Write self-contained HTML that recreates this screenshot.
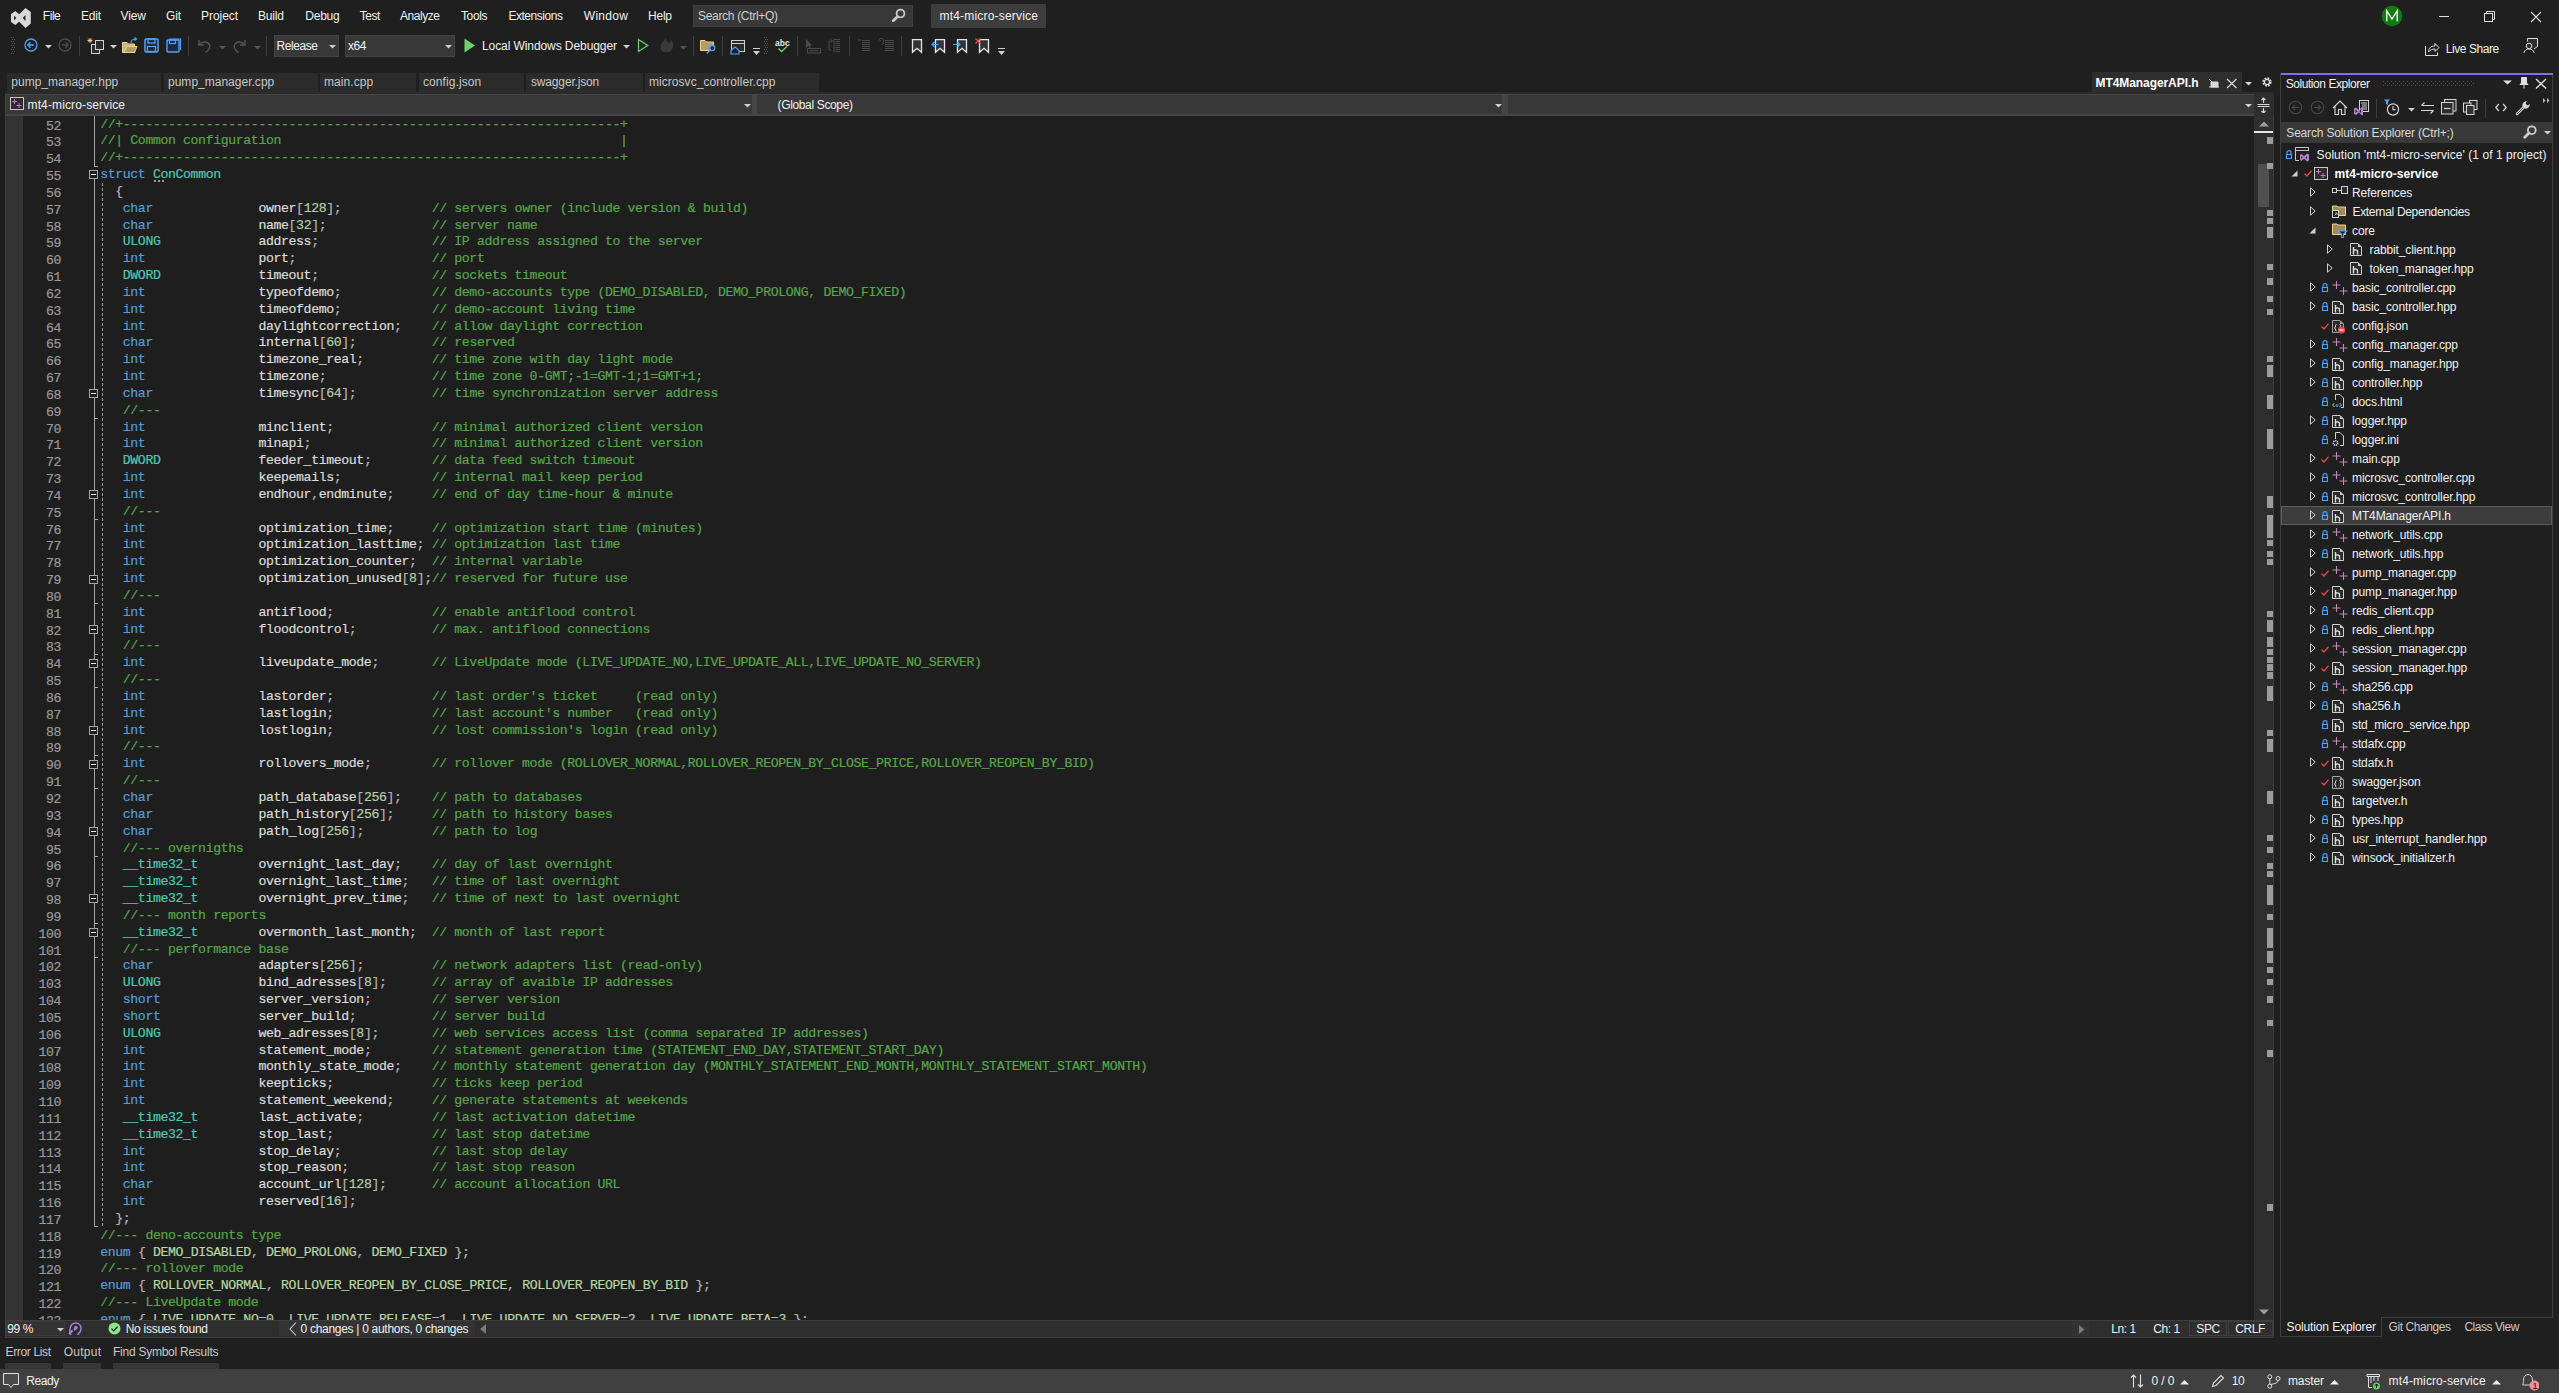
<!DOCTYPE html><html><head><meta charset="utf-8"><title>VS</title><style>html,body{margin:0;padding:0;width:2559px;height:1393px;overflow:hidden;background:#1f1f1f;position:relative}</style></head><body>
<svg style="position:absolute;left:4px;top:2px;" width="34" height="32" viewBox="0 0 34 32"><path d="M7 12 L11.3 9 L15.2 12.2 L21.5 6 L26.8 9.9 V21.6 L21.5 26 L15.2 19.8 L11.3 23 L7 20 Z M10 13.8 L12.4 16 L10 18.2 Z M21.5 13 L18.8 16 L21.5 19 Z" fill="#d9d9d9" fill-rule="evenodd"/></svg>
<div style="position:absolute;left:42.81px;top:9.14px;font-family:'Liberation Sans', sans-serif;font-size:12px;line-height:normal;color:#f1f1f1;font-weight:normal;letter-spacing:-0.45px;white-space:pre;">File</div>
<div style="position:absolute;left:81.0px;top:9.14px;font-family:'Liberation Sans', sans-serif;font-size:12px;line-height:normal;color:#f1f1f1;font-weight:normal;letter-spacing:-0.233px;white-space:pre;">Edit</div>
<div style="position:absolute;left:120.6px;top:9.14px;font-family:'Liberation Sans', sans-serif;font-size:12px;line-height:normal;color:#f1f1f1;font-weight:normal;letter-spacing:-0.133px;white-space:pre;">View</div>
<div style="position:absolute;left:166.0px;top:9.14px;font-family:'Liberation Sans', sans-serif;font-size:12px;line-height:normal;color:#f1f1f1;font-weight:normal;letter-spacing:-0.18px;white-space:pre;">Git</div>
<div style="position:absolute;left:201.0px;top:9.14px;font-family:'Liberation Sans', sans-serif;font-size:12px;line-height:normal;color:#f1f1f1;font-weight:normal;letter-spacing:-0.053px;white-space:pre;">Project</div>
<div style="position:absolute;left:258.0px;top:9.14px;font-family:'Liberation Sans', sans-serif;font-size:12px;line-height:normal;color:#f1f1f1;font-weight:normal;letter-spacing:-0.175px;white-space:pre;">Build</div>
<div style="position:absolute;left:305.3px;top:9.14px;font-family:'Liberation Sans', sans-serif;font-size:12px;line-height:normal;color:#f1f1f1;font-weight:normal;letter-spacing:-0.235px;white-space:pre;">Debug</div>
<div style="position:absolute;left:359.81px;top:9.14px;font-family:'Liberation Sans', sans-serif;font-size:12px;line-height:normal;color:#f1f1f1;font-weight:normal;letter-spacing:-0.45px;white-space:pre;">Test</div>
<div style="position:absolute;left:399.99px;top:9.14px;font-family:'Liberation Sans', sans-serif;font-size:12px;line-height:normal;color:#f1f1f1;font-weight:normal;letter-spacing:-0.45px;white-space:pre;">Analyze</div>
<div style="position:absolute;left:461.0px;top:9.14px;font-family:'Liberation Sans', sans-serif;font-size:12px;line-height:normal;color:#f1f1f1;font-weight:normal;letter-spacing:-0.38px;white-space:pre;">Tools</div>
<div style="position:absolute;left:508.39px;top:9.14px;font-family:'Liberation Sans', sans-serif;font-size:12px;line-height:normal;color:#f1f1f1;font-weight:normal;letter-spacing:-0.45px;white-space:pre;">Extensions</div>
<div style="position:absolute;left:583.75px;top:9.14px;font-family:'Liberation Sans', sans-serif;font-size:12px;line-height:normal;color:#f1f1f1;font-weight:normal;letter-spacing:0.306px;white-space:pre;">Window</div>
<div style="position:absolute;left:648.0px;top:9.14px;font-family:'Liberation Sans', sans-serif;font-size:12px;line-height:normal;color:#f1f1f1;font-weight:normal;letter-spacing:-0.22px;white-space:pre;">Help</div>
<div style="position:absolute;left:693px;top:5px;width:220px;height:22px;background:#383838;box-sizing:border-box;border:1px solid #3e3e3e;"></div>
<div style="position:absolute;left:698.0px;top:9.14px;font-family:'Liberation Sans', sans-serif;font-size:12px;line-height:normal;color:#d0d0d0;font-weight:normal;letter-spacing:-0.311px;white-space:pre;">Search (Ctrl+Q)</div>
<svg style="position:absolute;left:891px;top:8px;" width="15" height="15" viewBox="0 0 15 15"><circle cx="9.5" cy="5.5" r="3.9" fill="none" stroke="#c8c8c8" stroke-width="1.8"/><path d="M6.6 8.4 L2.2 12.8" stroke="#c8c8c8" stroke-width="2.8" stroke-linecap="round"/></svg>
<div style="position:absolute;left:931px;top:4px;width:115px;height:24px;background:#3d3d3d;"></div>
<div style="position:absolute;left:939.5px;top:9.14px;font-family:'Liberation Sans', sans-serif;font-size:12px;line-height:normal;color:#f1f1f1;font-weight:normal;letter-spacing:0.197px;white-space:pre;">mt4-micro-service</div>
<svg style="position:absolute;left:2381px;top:5px;" width="22" height="22" viewBox="0 0 22 22"><circle cx="11" cy="11" r="10.2" fill="#107c10"/><path d="M5.8 16.2 V5.8 L11 14 L16.2 5.8 V16.2" fill="none" stroke="#ffffff" stroke-width="1.3"/></svg>
<div style="position:absolute;left:2439px;top:16px;width:10px;height:1px;background:#e0e0e0;"></div>
<svg style="position:absolute;left:2484px;top:11px;" width="12" height="12" viewBox="0 0 12 12"><rect x="0.5" y="2.5" width="8" height="8" fill="none" stroke="#e0e0e0"/><path d="M2.5 2.5 V0.5 H10.5 V8.5 H8.5" fill="none" stroke="#e0e0e0"/></svg>
<svg style="position:absolute;left:2530px;top:11px;" width="12" height="12" viewBox="0 0 12 12"><path d="M1 1 L11 11 M11 1 L1 11" stroke="#e0e0e0" stroke-width="1.1"/></svg>
<svg style="position:absolute;left:11px;top:37px;" width="5" height="18" viewBox="0 0 5 18"><rect x="0" y="0" width="1" height="1" fill="#555"/><rect x="2" y="0" width="1" height="1" fill="#555"/><rect x="1" y="2" width="1" height="1" fill="#555"/><rect x="3" y="2" width="1" height="1" fill="#555"/><rect x="0" y="4" width="1" height="1" fill="#555"/><rect x="2" y="4" width="1" height="1" fill="#555"/><rect x="1" y="6" width="1" height="1" fill="#555"/><rect x="3" y="6" width="1" height="1" fill="#555"/><rect x="0" y="8" width="1" height="1" fill="#555"/><rect x="2" y="8" width="1" height="1" fill="#555"/><rect x="1" y="10" width="1" height="1" fill="#555"/><rect x="3" y="10" width="1" height="1" fill="#555"/><rect x="0" y="12" width="1" height="1" fill="#555"/><rect x="2" y="12" width="1" height="1" fill="#555"/><rect x="1" y="14" width="1" height="1" fill="#555"/><rect x="3" y="14" width="1" height="1" fill="#555"/><rect x="0" y="16" width="1" height="1" fill="#555"/><rect x="2" y="16" width="1" height="1" fill="#555"/></svg>
<svg style="position:absolute;left:24px;top:38px;" width="14" height="14" viewBox="0 0 14 14"><circle cx="7" cy="7" r="6" fill="none" stroke="#4da3ff" stroke-width="1.3"/><path d="M10 7 H4 M6.5 4.3 L3.8 7 L6.5 9.7" fill="none" stroke="#4da3ff" stroke-width="1.3"/></svg>
<svg style="position:absolute;left:45px;top:45px;" width="7" height="4" viewBox="0 0 7 4"><path d="M0 0 H7 L3.5 3.5 Z" fill="#d0d0d0"/></svg>
<svg style="position:absolute;left:58px;top:38px;" width="14" height="14" viewBox="0 0 14 14"><circle cx="7" cy="7" r="6" fill="none" stroke="#4a4a4a" stroke-width="1.3"/><path d="M4 7 H10 M7.5 4.3 L10.2 7 L7.5 9.7" fill="none" stroke="#4a4a4a" stroke-width="1.3"/></svg>
<div style="position:absolute;left:79px;top:36px;width:1px;height:20px;background:#3d3d3d;"></div>
<svg style="position:absolute;left:87px;top:37px;" width="18" height="18" viewBox="0 0 18 18"><rect x="4.5" y="7.5" width="8" height="9" fill="#2d2d2d" stroke="#d0d0d0"/><rect x="8.5" y="3.5" width="8" height="9" fill="#2d2d2d" stroke="#d0d0d0"/><path d="M3 1 V6 M0.5 3.5 H5.5 M1.2 1.7 L4.8 5.3 M4.8 1.7 L1.2 5.3" stroke="#f0d080" stroke-width="1"/></svg>
<svg style="position:absolute;left:110px;top:45px;" width="7" height="4" viewBox="0 0 7 4"><path d="M0 0 H7 L3.5 3.5 Z" fill="#d0d0d0"/></svg>
<svg style="position:absolute;left:122px;top:37px;" width="16" height="17" viewBox="0 0 16 17"><path d="M0.5 5.5 H5 L6.5 7 H12.5 V15.5 H0.5 Z" fill="#c8b57a" stroke="#f2d38b"/><path d="M2 15.5 L4.5 9.5 H15 L12.5 15.5 Z" fill="#b09c64" stroke="#f2d38b"/><path d="M9 6 C9 3 11 2 14 2 M12.5 0.5 L14.5 2 L12.5 3.5" fill="none" stroke="#4da3ff" stroke-width="1.2"/></svg>
<svg style="position:absolute;left:144px;top:38px;" width="16" height="15" viewBox="0 0 16 15"><rect x="1" y="1" width="13" height="13" rx="1" fill="#1f2a38" stroke="#4da3ff" stroke-width="1.5"/><rect x="4" y="1" width="7" height="4" fill="none" stroke="#4da3ff" stroke-width="1.3"/><rect x="3.5" y="8.5" width="8" height="5" fill="none" stroke="#4da3ff" stroke-width="1.2"/></svg>
<svg style="position:absolute;left:166px;top:38px;" width="16" height="15" viewBox="0 0 16 15"><rect x="1" y="2" width="12" height="12" rx="1" fill="#1f2a38" stroke="#4da3ff" stroke-width="1.4"/><path d="M3 1 H14.5 V12" fill="none" stroke="#4da3ff" stroke-width="1.2"/><rect x="3.5" y="2" width="6" height="3.5" fill="none" stroke="#4da3ff" stroke-width="1.2"/></svg>
<div style="position:absolute;left:188px;top:36px;width:1px;height:20px;background:#3d3d3d;"></div>
<svg style="position:absolute;left:197px;top:38px;" width="15" height="15" viewBox="0 0 15 15"><path d="M2 2 V7 H7 M2.5 6.5 C5 3 11 3 12.5 7 C13.5 10 11.5 12.5 8.5 14.5" fill="none" stroke="#555" stroke-width="1.4"/></svg>
<svg style="position:absolute;left:219px;top:46px;" width="7" height="4" viewBox="0 0 7 4"><path d="M0 0 H7 L3.5 3.5 Z" fill="#555"/></svg>
<svg style="position:absolute;left:232px;top:38px;" width="15" height="15" viewBox="0 0 15 15"><path d="M13 2 V7 H8 M12.5 6.5 C10 3 4 3 2.5 7 C1.5 10 3.5 12.5 6.5 14.5" fill="none" stroke="#555" stroke-width="1.4"/></svg>
<svg style="position:absolute;left:254px;top:46px;" width="7" height="4" viewBox="0 0 7 4"><path d="M0 0 H7 L3.5 3.5 Z" fill="#555"/></svg>
<div style="position:absolute;left:266px;top:36px;width:1px;height:20px;background:#3d3d3d;"></div>
<div style="position:absolute;left:274px;top:35px;width:65px;height:22px;background:#383838;box-sizing:border-box;border:1px solid #434343;"></div>
<div style="position:absolute;left:276.58px;top:39.14px;font-family:'Liberation Sans', sans-serif;font-size:12px;line-height:normal;color:#f1f1f1;font-weight:normal;letter-spacing:-0.45px;white-space:pre;">Release</div>
<svg style="position:absolute;left:328.5px;top:45px;" width="7" height="4" viewBox="0 0 7 4"><path d="M0 0 H7 L3.5 3.5 Z" fill="#d0d0d0"/></svg>
<div style="position:absolute;left:345px;top:35px;width:110px;height:22px;background:#383838;box-sizing:border-box;border:1px solid #434343;"></div>
<div style="position:absolute;left:348.04px;top:39.14px;font-family:'Liberation Sans', sans-serif;font-size:12px;line-height:normal;color:#f1f1f1;font-weight:normal;letter-spacing:-0.45px;white-space:pre;">x64</div>
<svg style="position:absolute;left:445px;top:45px;" width="7" height="4" viewBox="0 0 7 4"><path d="M0 0 H7 L3.5 3.5 Z" fill="#d0d0d0"/></svg>
<svg style="position:absolute;left:464px;top:38px;" width="12" height="15" viewBox="0 0 12 15"><path d="M0.5 0.5 L11 7.5 L0.5 14.5 Z" fill="#6fd073"/></svg>
<div style="position:absolute;left:482.0px;top:39.14px;font-family:'Liberation Sans', sans-serif;font-size:12px;line-height:normal;color:#f1f1f1;font-weight:normal;letter-spacing:-0.083px;white-space:pre;">Local Windows Debugger</div>
<svg style="position:absolute;left:623px;top:45px;" width="7" height="4" viewBox="0 0 7 4"><path d="M0 0 H7 L3.5 3.5 Z" fill="#d0d0d0"/></svg>
<svg style="position:absolute;left:637px;top:38px;" width="12" height="15" viewBox="0 0 12 15"><path d="M1.5 1.5 L10.8 7.5 L1.5 13.5 Z" fill="#1c2a1c" stroke="#6fd073" stroke-width="1.2"/></svg>
<svg style="position:absolute;left:659px;top:37px;" width="15" height="16" viewBox="0 0 15 16"><path d="M7.5 15.5 C3 15.5 1 12.5 1.5 9 C2 6 5 4 7 1 C7.5 4 9 5 10 6.5 C11 5 12 3.5 13 3 C14 6 14.5 9 13.5 11.5 C12.5 14 10.5 15.5 7.5 15.5 Z" fill="#3a3a3a"/></svg>
<svg style="position:absolute;left:680px;top:46px;" width="7" height="4" viewBox="0 0 7 4"><path d="M0 0 H7 L3.5 3.5 Z" fill="#555"/></svg>
<div style="position:absolute;left:693px;top:36px;width:1px;height:20px;background:#3d3d3d;"></div>
<svg style="position:absolute;left:700px;top:39px;" width="17" height="15" viewBox="0 0 17 15"><path d="M0.5 1.5 H5 L6.5 3 H13.5 V11.5 H0.5 Z" fill="#b09c64" stroke="#f2d38b"/><circle cx="12.3" cy="9" r="2.5" fill="#1f1f1f" stroke="#4da3ff" stroke-width="1.3"/><path d="M10.5 10.8 L6.8 14.5" stroke="#4da3ff" stroke-width="1.3"/></svg>
<div style="position:absolute;left:722px;top:36px;width:1px;height:20px;background:#3d3d3d;"></div>
<svg style="position:absolute;left:730px;top:39px;" width="17" height="16" viewBox="0 0 17 16"><rect x="1.5" y="1.5" width="13" height="11" fill="#2a2a2a" stroke="#d0d0d0"/><path d="M1.5 4.5 H14.5" stroke="#d0d0d0"/><path d="M1 11.5 L5 8 L9 11.5 V15 H1 Z" fill="#1f1f1f" stroke="#4da3ff" stroke-width="1.2"/></svg>
<svg style="position:absolute;left:753px;top:48px;" width="7" height="8" viewBox="0 0 7 8"><rect x="0" y="0" width="7" height="1" fill="#d0d0d0"/><path d="M0 3 H7 L3.5 7 Z" fill="#d0d0d0"/></svg>
<svg style="position:absolute;left:764px;top:37px;" width="5" height="18" viewBox="0 0 5 18"><rect x="0" y="0" width="1" height="1" fill="#555"/><rect x="2" y="0" width="1" height="1" fill="#555"/><rect x="1" y="2" width="1" height="1" fill="#555"/><rect x="3" y="2" width="1" height="1" fill="#555"/><rect x="0" y="4" width="1" height="1" fill="#555"/><rect x="2" y="4" width="1" height="1" fill="#555"/><rect x="1" y="6" width="1" height="1" fill="#555"/><rect x="3" y="6" width="1" height="1" fill="#555"/><rect x="0" y="8" width="1" height="1" fill="#555"/><rect x="2" y="8" width="1" height="1" fill="#555"/><rect x="1" y="10" width="1" height="1" fill="#555"/><rect x="3" y="10" width="1" height="1" fill="#555"/><rect x="0" y="12" width="1" height="1" fill="#555"/><rect x="2" y="12" width="1" height="1" fill="#555"/><rect x="1" y="14" width="1" height="1" fill="#555"/><rect x="3" y="14" width="1" height="1" fill="#555"/><rect x="0" y="16" width="1" height="1" fill="#555"/><rect x="2" y="16" width="1" height="1" fill="#555"/></svg>
<svg style="position:absolute;left:775px;top:39px;" width="15" height="14" viewBox="0 0 15 14"><text x="0" y="7" font-family="Liberation Sans" font-size="8.5" font-weight="bold" fill="#e8e8e8">abc</text><path d="M3.5 9.5 L6.5 12.5 L12 7.5" fill="none" stroke="#6fd073" stroke-width="1.3"/></svg>
<div style="position:absolute;left:797px;top:36px;width:1px;height:20px;background:#3d3d3d;"></div>
<svg style="position:absolute;left:805px;top:38px;" width="17" height="16" viewBox="0 0 17 16"><path d="M1 1 V10 L3.5 8 L5 11 L6 10.5 L4.8 7.5 L7.5 7.5 Z" fill="#4a4a4a"/><rect x="2.5" y="10.5" width="13" height="4.5" fill="none" stroke="#4a4a4a"/><path d="M5 12.7 H13" stroke="#4a4a4a"/></svg>
<svg style="position:absolute;left:828px;top:38px;" width="15" height="15" viewBox="0 0 15 15"><path d="M1 12 V3 H4 M3 1.5 L4.5 3 L3 4.5 M1 12 H3" fill="none" stroke="#4a4a4a"/><path d="M6 1 V14 M6 1.5 H12 M7.5 3.5 H12 M7.5 5.5 H12 M7.5 7.5 H12 M7.5 9.5 H12 M7.5 11.5 H12 M7.5 13.5 H12" stroke="#4a4a4a"/></svg>
<div style="position:absolute;left:849px;top:36px;width:1px;height:20px;background:#3d3d3d;"></div>
<svg style="position:absolute;left:858px;top:39px;" width="15" height="13" viewBox="0 0 15 13"><path d="M0 1 H3 M4 1.5 H12 M4 3.5 H12 M4 5.5 H12 M4 7.5 H12 M4 9.5 H12 M4 11.5 H12" stroke="#4a4a4a"/></svg>
<svg style="position:absolute;left:878px;top:38px;" width="17" height="15" viewBox="0 0 17 15"><path d="M3 3.5 C1 2 1 0.5 3 0.5 C6 0.5 7 3 4 7" fill="none" stroke="#4a4a4a"/><path d="M7 2.5 H16 M7 4.5 H16 M7 6.5 H16 M7 8.5 H16 M7 10.5 H16 M7 12.5 H16" stroke="#4a4a4a"/></svg>
<div style="position:absolute;left:901px;top:36px;width:1px;height:20px;background:#3d3d3d;"></div>
<svg style="position:absolute;left:910px;top:38px;" width="16" height="16" viewBox="0 0 16 16"><path d="M2.5 1.6 H11.5 V14.3 L7 10.3 L2.5 14.3 Z" fill="#333" stroke="#e8e8e8" stroke-width="1.3"/></svg>
<svg style="position:absolute;left:933px;top:38px;" width="16" height="16" viewBox="0 0 16 16"><path d="M2.5 1.6 H11.5 V14.3 L7 10.3 L2.5 14.3 Z" fill="#333" stroke="#e8e8e8" stroke-width="1.3"/></svg>
<svg style="position:absolute;left:931px;top:41px;" width="8" height="7" viewBox="0 0 8 7"><path d="M7.5 3.5 H1 M3.5 1 L1 3.5 L3.5 6" fill="none" stroke="#4da3ff" stroke-width="1.2"/></svg>
<svg style="position:absolute;left:955px;top:38px;" width="16" height="16" viewBox="0 0 16 16"><path d="M2.5 1.6 H11.5 V14.3 L7 10.3 L2.5 14.3 Z" fill="#333" stroke="#e8e8e8" stroke-width="1.3"/></svg>
<svg style="position:absolute;left:953px;top:41px;" width="8" height="7" viewBox="0 0 8 7"><path d="M0 3.5 H7 M4.5 1 L7 3.5 L4.5 6" fill="none" stroke="#4da3ff" stroke-width="1.2"/></svg>
<svg style="position:absolute;left:977px;top:38px;" width="16" height="16" viewBox="0 0 16 16"><path d="M2.5 1.6 H11.5 V14.3 L7 10.3 L2.5 14.3 Z" fill="#333" stroke="#e8e8e8" stroke-width="1.3"/></svg>
<svg style="position:absolute;left:975px;top:38px;" width="6" height="6" viewBox="0 0 6 6"><path d="M0.5 0.5 L5.5 5.5 M5.5 0.5 L0.5 5.5" stroke="#f14c4c" stroke-width="1.2"/></svg>
<svg style="position:absolute;left:998px;top:48px;" width="7" height="8" viewBox="0 0 7 8"><rect x="0" y="0" width="7" height="1" fill="#d0d0d0"/><path d="M0 3 H7 L3.5 7 Z" fill="#d0d0d0"/></svg>
<svg style="position:absolute;left:2425px;top:41px;" width="16" height="15" viewBox="0 0 16 15"><path d="M0.5 5 V14.5 H12.5 V11.5" fill="none" stroke="#e0e0e0"/><path d="M3.5 11 C3.5 7 6 5 10 5 V2.5 L14 6.5 L10 10.5 V8 C7 8 5 9 3.5 11 Z" fill="none" stroke="#e0e0e0"/></svg>
<div style="position:absolute;left:2445.84px;top:41.54px;font-family:'Liberation Sans', sans-serif;font-size:12px;line-height:normal;color:#f1f1f1;font-weight:normal;letter-spacing:-0.45px;white-space:pre;">Live Share</div>
<svg style="position:absolute;left:2523px;top:38px;" width="16" height="16" viewBox="0 0 16 16"><path d="M4.5 3.5 V0.5 H14.5 V8.5 L11 11" fill="#2d2d2d" stroke="#e0e0e0"/><circle cx="6" cy="8" r="2.8" fill="#2d2d2d" stroke="#e0e0e0"/><path d="M0.8 15 C1.5 12 3.5 11 6 11 C8.5 11 10.5 12 11.2 15" fill="none" stroke="#e0e0e0"/></svg>
<div style="position:absolute;left:7px;top:73px;width:154px;height:19px;background:#2b2b2b;"></div>
<div style="position:absolute;left:11.25px;top:75.14px;font-family:'Liberation Sans', sans-serif;font-size:12px;line-height:normal;color:#c8c8c8;font-weight:normal;letter-spacing:0.017px;white-space:pre;">pump_manager.hpp</div>
<div style="position:absolute;left:163.75px;top:73px;width:153.75px;height:19px;background:#2b2b2b;"></div>
<div style="position:absolute;left:168.0px;top:75.14px;font-family:'Liberation Sans', sans-serif;font-size:12px;line-height:normal;color:#c8c8c8;font-weight:normal;letter-spacing:0.011px;white-space:pre;">pump_manager.cpp</div>
<div style="position:absolute;left:320px;top:73px;width:96px;height:19px;background:#2b2b2b;"></div>
<div style="position:absolute;left:324.0px;top:75.14px;font-family:'Liberation Sans', sans-serif;font-size:12px;line-height:normal;color:#c8c8c8;font-weight:normal;letter-spacing:0.076px;white-space:pre;">main.cpp</div>
<div style="position:absolute;left:418.75px;top:73px;width:105.0px;height:19px;background:#2b2b2b;"></div>
<div style="position:absolute;left:423.0px;top:75.14px;font-family:'Liberation Sans', sans-serif;font-size:12px;line-height:normal;color:#c8c8c8;font-weight:normal;letter-spacing:0.089px;white-space:pre;">config.json</div>
<div style="position:absolute;left:526px;top:73px;width:116.5px;height:19px;background:#2b2b2b;"></div>
<div style="position:absolute;left:531.0px;top:75.14px;font-family:'Liberation Sans', sans-serif;font-size:12px;line-height:normal;color:#c8c8c8;font-weight:normal;letter-spacing:-0.161px;white-space:pre;">swagger.json</div>
<div style="position:absolute;left:645px;top:73px;width:173.5px;height:19px;background:#2b2b2b;"></div>
<div style="position:absolute;left:649.0px;top:75.14px;font-family:'Liberation Sans', sans-serif;font-size:12px;line-height:normal;color:#c8c8c8;font-weight:normal;letter-spacing:0.045px;white-space:pre;">microsvc_controller.cpp</div>
<div style="position:absolute;left:2092px;top:72px;width:150px;height:20px;background:#2e2e2e;"></div>
<div style="position:absolute;left:2095.5px;top:76.14px;font-family:'Liberation Sans', sans-serif;font-size:12px;line-height:normal;color:#ffffff;font-weight:bold;letter-spacing:-0.074px;white-space:pre;">MT4ManagerAPI.h</div>
<svg style="position:absolute;left:2208px;top:78px;" width="12" height="10" viewBox="0 0 12 10"><path d="M1 1 L4 4 M3 4 H10 V9 H3 Z M1 9 H11" fill="#d8d8d8" stroke="#d8d8d8"/></svg>
<svg style="position:absolute;left:2226px;top:78px;" width="12" height="11" viewBox="0 0 12 11"><path d="M1 1 L10.5 10 M10.5 1 L1 10" stroke="#d8d8d8" stroke-width="1.3"/></svg>
<svg style="position:absolute;left:2245px;top:82px;" width="7" height="4" viewBox="0 0 7 4"><path d="M0 0 H7 L3.5 3.5 Z" fill="#d8d8d8"/></svg>
<svg style="position:absolute;left:2261px;top:76px;" width="12" height="12" viewBox="0 0 12 12"><circle cx="6" cy="6" r="3.4" fill="none" stroke="#d8d8d8" stroke-width="2.6" stroke-dasharray="1.6 1.07"/><circle cx="6" cy="6" r="2.6" fill="none" stroke="#d8d8d8" stroke-width="1.3"/></svg>
<div style="position:absolute;left:5px;top:92px;width:2269px;height:24px;background:#2a2a2a;"></div>
<div style="position:absolute;left:5px;top:94px;width:2249px;height:22px;background:#454545;"></div>
<div style="position:absolute;left:6px;top:95px;width:746px;height:18.5px;background:#383838;"></div>
<div style="position:absolute;left:757px;top:95px;width:745px;height:18.5px;background:#383838;"></div>
<div style="position:absolute;left:1508px;top:95px;width:746px;height:18.5px;background:#383838;"></div>
<svg style="position:absolute;left:10px;top:97px;" width="15" height="14" viewBox="0 0 15 14"><rect x="0.5" y="0.5" width="13" height="12" fill="#2d2d2d" stroke="#c8c8c8"/><path d="M2 4.5 H7 M4.5 2 V7 M6.5 8.5 H11.5 M9 6 V11" stroke="#d070d0" stroke-width="1"/></svg>
<div style="position:absolute;left:27.5px;top:97.84px;font-family:'Liberation Sans', sans-serif;font-size:12px;line-height:normal;color:#f1f1f1;font-weight:normal;letter-spacing:0.135px;white-space:pre;">mt4-micro-service</div>
<svg style="position:absolute;left:744px;top:104px;" width="7" height="4" viewBox="0 0 7 4"><path d="M0 0 H7 L3.5 3.5 Z" fill="#d0d0d0"/></svg>
<div style="position:absolute;left:777.5px;top:97.84px;font-family:'Liberation Sans', sans-serif;font-size:12px;line-height:normal;color:#f1f1f1;font-weight:normal;letter-spacing:-0.349px;white-space:pre;">(Global Scope)</div>
<svg style="position:absolute;left:1495px;top:104px;" width="7" height="4" viewBox="0 0 7 4"><path d="M0 0 H7 L3.5 3.5 Z" fill="#d0d0d0"/></svg>
<svg style="position:absolute;left:2245px;top:104px;" width="7" height="4" viewBox="0 0 7 4"><path d="M0 0 H7 L3.5 3.5 Z" fill="#d0d0d0"/></svg>
<div style="position:absolute;left:2254px;top:94px;width:20px;height:22px;background:#2e2e2e;"></div>
<svg style="position:absolute;left:2256px;top:97px;" width="15" height="16" viewBox="0 0 15 16"><path d="M1.5 7.5 H13.5 M1.5 9.5 H13.5 M7.5 1 V6 M7.5 11 V16 M5.5 3 L7.5 1 L9.5 3 M5.5 14 L7.5 16 L9.5 14" fill="none" stroke="#d8d8d8" stroke-width="1.2"/></svg>
<div style="position:absolute;left:5px;top:116px;width:1px;height:1204px;background:#3a3a3a;"></div>
<div style="position:absolute;left:6px;top:116px;width:17px;height:1204px;background:#333333;"></div>
<div style="position:absolute;left:23px;top:116px;width:2231px;height:1204px;background:#1e1e1e;"></div>
<div style="position:absolute;left:0;top:0;width:2254px;height:1320px;overflow:hidden;font-family:'Liberation Mono', monospace;font-size:13.2px;letter-spacing:-0.381px;line-height:normal;white-space:pre;-webkit-text-stroke:0.2px currentColor"><div style="position:absolute;left:45.92px;top:118.50px;color:#999999">52</div><div style="position:absolute;left:100.2px;top:116.50px"><span style="color:#57a64a">//+------------------------------------------------------------------+</span></div><div style="position:absolute;left:45.92px;top:135.34px;color:#999999">53</div><div style="position:absolute;left:100.2px;top:133.34px"><span style="color:#57a64a">//| Common configuration                                             |</span></div><div style="position:absolute;left:45.92px;top:152.18px;color:#999999">54</div><div style="position:absolute;left:100.2px;top:150.18px"><span style="color:#57a64a">//+------------------------------------------------------------------+</span></div><div style="position:absolute;left:45.92px;top:169.02px;color:#999999">55</div><div style="position:absolute;left:100.2px;top:167.02px"><span style="color:#569cd6">struct</span><span style="color:#dcdcdc"> </span><span style="color:#4ec9b0">ConCommon</span></div><div style="position:absolute;left:45.92px;top:185.85px;color:#999999">56</div><div style="position:absolute;left:100.2px;top:183.85px"><span style="color:#dcdcdc">  </span><span style="color:#b4b4b4">{</span></div><div style="position:absolute;left:45.92px;top:202.69px;color:#999999">57</div><div style="position:absolute;left:100.2px;top:200.69px"><span style="color:#dcdcdc">   </span><span style="color:#569cd6">char</span><span style="color:#dcdcdc">              </span><span style="color:#dcdcdc">owner</span><span style="color:#b4b4b4">[</span><span style="color:#b5cea8">128</span><span style="color:#b4b4b4">]</span><span style="color:#b4b4b4">;</span><span style="color:#dcdcdc">            </span><span style="color:#57a64a">// servers owner (include version &amp; build)</span></div><div style="position:absolute;left:45.92px;top:219.53px;color:#999999">58</div><div style="position:absolute;left:100.2px;top:217.53px"><span style="color:#dcdcdc">   </span><span style="color:#569cd6">char</span><span style="color:#dcdcdc">              </span><span style="color:#dcdcdc">name</span><span style="color:#b4b4b4">[</span><span style="color:#b5cea8">32</span><span style="color:#b4b4b4">]</span><span style="color:#b4b4b4">;</span><span style="color:#dcdcdc">              </span><span style="color:#57a64a">// server name</span></div><div style="position:absolute;left:45.92px;top:236.36px;color:#999999">59</div><div style="position:absolute;left:100.2px;top:234.36px"><span style="color:#dcdcdc">   </span><span style="color:#4ec9b0">ULONG</span><span style="color:#dcdcdc">             </span><span style="color:#dcdcdc">address</span><span style="color:#b4b4b4">;</span><span style="color:#dcdcdc">               </span><span style="color:#57a64a">// IP address assigned to the server</span></div><div style="position:absolute;left:45.92px;top:253.20px;color:#999999">60</div><div style="position:absolute;left:100.2px;top:251.20px"><span style="color:#dcdcdc">   </span><span style="color:#569cd6">int</span><span style="color:#dcdcdc">               </span><span style="color:#dcdcdc">port</span><span style="color:#b4b4b4">;</span><span style="color:#dcdcdc">                  </span><span style="color:#57a64a">// port</span></div><div style="position:absolute;left:45.92px;top:270.04px;color:#999999">61</div><div style="position:absolute;left:100.2px;top:268.04px"><span style="color:#dcdcdc">   </span><span style="color:#4ec9b0">DWORD</span><span style="color:#dcdcdc">             </span><span style="color:#dcdcdc">timeout</span><span style="color:#b4b4b4">;</span><span style="color:#dcdcdc">               </span><span style="color:#57a64a">// sockets timeout</span></div><div style="position:absolute;left:45.92px;top:286.87px;color:#999999">62</div><div style="position:absolute;left:100.2px;top:284.87px"><span style="color:#dcdcdc">   </span><span style="color:#569cd6">int</span><span style="color:#dcdcdc">               </span><span style="color:#dcdcdc">typeofdemo</span><span style="color:#b4b4b4">;</span><span style="color:#dcdcdc">            </span><span style="color:#57a64a">// demo-accounts type (DEMO_DISABLED, DEMO_PROLONG, DEMO_FIXED)</span></div><div style="position:absolute;left:45.92px;top:303.71px;color:#999999">63</div><div style="position:absolute;left:100.2px;top:301.71px"><span style="color:#dcdcdc">   </span><span style="color:#569cd6">int</span><span style="color:#dcdcdc">               </span><span style="color:#dcdcdc">timeofdemo</span><span style="color:#b4b4b4">;</span><span style="color:#dcdcdc">            </span><span style="color:#57a64a">// demo-account living time</span></div><div style="position:absolute;left:45.92px;top:320.55px;color:#999999">64</div><div style="position:absolute;left:100.2px;top:318.55px"><span style="color:#dcdcdc">   </span><span style="color:#569cd6">int</span><span style="color:#dcdcdc">               </span><span style="color:#dcdcdc">daylightcorrection</span><span style="color:#b4b4b4">;</span><span style="color:#dcdcdc">    </span><span style="color:#57a64a">// allow daylight correction</span></div><div style="position:absolute;left:45.92px;top:337.39px;color:#999999">65</div><div style="position:absolute;left:100.2px;top:335.39px"><span style="color:#dcdcdc">   </span><span style="color:#569cd6">char</span><span style="color:#dcdcdc">              </span><span style="color:#dcdcdc">internal</span><span style="color:#b4b4b4">[</span><span style="color:#b5cea8">60</span><span style="color:#b4b4b4">]</span><span style="color:#b4b4b4">;</span><span style="color:#dcdcdc">          </span><span style="color:#57a64a">// reserved</span></div><div style="position:absolute;left:45.92px;top:354.22px;color:#999999">66</div><div style="position:absolute;left:100.2px;top:352.22px"><span style="color:#dcdcdc">   </span><span style="color:#569cd6">int</span><span style="color:#dcdcdc">               </span><span style="color:#dcdcdc">timezone_real</span><span style="color:#b4b4b4">;</span><span style="color:#dcdcdc">         </span><span style="color:#57a64a">// time zone with day light mode</span></div><div style="position:absolute;left:45.92px;top:371.06px;color:#999999">67</div><div style="position:absolute;left:100.2px;top:369.06px"><span style="color:#dcdcdc">   </span><span style="color:#569cd6">int</span><span style="color:#dcdcdc">               </span><span style="color:#dcdcdc">timezone</span><span style="color:#b4b4b4">;</span><span style="color:#dcdcdc">              </span><span style="color:#57a64a">// time zone 0-GMT;-1=GMT-1;1=GMT+1;</span></div><div style="position:absolute;left:45.92px;top:387.90px;color:#999999">68</div><div style="position:absolute;left:100.2px;top:385.90px"><span style="color:#dcdcdc">   </span><span style="color:#569cd6">char</span><span style="color:#dcdcdc">              </span><span style="color:#dcdcdc">timesync</span><span style="color:#b4b4b4">[</span><span style="color:#b5cea8">64</span><span style="color:#b4b4b4">]</span><span style="color:#b4b4b4">;</span><span style="color:#dcdcdc">          </span><span style="color:#57a64a">// time synchronization server address</span></div><div style="position:absolute;left:45.92px;top:404.73px;color:#999999">69</div><div style="position:absolute;left:100.2px;top:402.73px"><span style="color:#dcdcdc">   </span><span style="color:#57a64a">//---</span></div><div style="position:absolute;left:45.92px;top:421.57px;color:#999999">70</div><div style="position:absolute;left:100.2px;top:419.57px"><span style="color:#dcdcdc">   </span><span style="color:#569cd6">int</span><span style="color:#dcdcdc">               </span><span style="color:#dcdcdc">minclient</span><span style="color:#b4b4b4">;</span><span style="color:#dcdcdc">             </span><span style="color:#57a64a">// minimal authorized client version</span></div><div style="position:absolute;left:45.92px;top:438.41px;color:#999999">71</div><div style="position:absolute;left:100.2px;top:436.41px"><span style="color:#dcdcdc">   </span><span style="color:#569cd6">int</span><span style="color:#dcdcdc">               </span><span style="color:#dcdcdc">minapi</span><span style="color:#b4b4b4">;</span><span style="color:#dcdcdc">                </span><span style="color:#57a64a">// minimal authorized client version</span></div><div style="position:absolute;left:45.92px;top:455.24px;color:#999999">72</div><div style="position:absolute;left:100.2px;top:453.24px"><span style="color:#dcdcdc">   </span><span style="color:#4ec9b0">DWORD</span><span style="color:#dcdcdc">             </span><span style="color:#dcdcdc">feeder_timeout</span><span style="color:#b4b4b4">;</span><span style="color:#dcdcdc">        </span><span style="color:#57a64a">// data feed switch timeout</span></div><div style="position:absolute;left:45.92px;top:472.08px;color:#999999">73</div><div style="position:absolute;left:100.2px;top:470.08px"><span style="color:#dcdcdc">   </span><span style="color:#569cd6">int</span><span style="color:#dcdcdc">               </span><span style="color:#dcdcdc">keepemails</span><span style="color:#b4b4b4">;</span><span style="color:#dcdcdc">            </span><span style="color:#57a64a">// internal mail keep period</span></div><div style="position:absolute;left:45.92px;top:488.92px;color:#999999">74</div><div style="position:absolute;left:100.2px;top:486.92px"><span style="color:#dcdcdc">   </span><span style="color:#569cd6">int</span><span style="color:#dcdcdc">               </span><span style="color:#dcdcdc">endhour</span><span style="color:#b4b4b4">,</span><span style="color:#dcdcdc">endminute</span><span style="color:#b4b4b4">;</span><span style="color:#dcdcdc">     </span><span style="color:#57a64a">// end of day time-hour &amp; minute</span></div><div style="position:absolute;left:45.92px;top:505.76px;color:#999999">75</div><div style="position:absolute;left:100.2px;top:503.76px"><span style="color:#dcdcdc">   </span><span style="color:#57a64a">//---</span></div><div style="position:absolute;left:45.92px;top:522.59px;color:#999999">76</div><div style="position:absolute;left:100.2px;top:520.59px"><span style="color:#dcdcdc">   </span><span style="color:#569cd6">int</span><span style="color:#dcdcdc">               </span><span style="color:#dcdcdc">optimization_time</span><span style="color:#b4b4b4">;</span><span style="color:#dcdcdc">     </span><span style="color:#57a64a">// optimization start time (minutes)</span></div><div style="position:absolute;left:45.92px;top:539.43px;color:#999999">77</div><div style="position:absolute;left:100.2px;top:537.43px"><span style="color:#dcdcdc">   </span><span style="color:#569cd6">int</span><span style="color:#dcdcdc">               </span><span style="color:#dcdcdc">optimization_lasttime</span><span style="color:#b4b4b4">;</span><span style="color:#dcdcdc"> </span><span style="color:#57a64a">// optimization last time</span></div><div style="position:absolute;left:45.92px;top:556.27px;color:#999999">78</div><div style="position:absolute;left:100.2px;top:554.27px"><span style="color:#dcdcdc">   </span><span style="color:#569cd6">int</span><span style="color:#dcdcdc">               </span><span style="color:#dcdcdc">optimization_counter</span><span style="color:#b4b4b4">;</span><span style="color:#dcdcdc">  </span><span style="color:#57a64a">// internal variable</span></div><div style="position:absolute;left:45.92px;top:573.10px;color:#999999">79</div><div style="position:absolute;left:100.2px;top:571.10px"><span style="color:#dcdcdc">   </span><span style="color:#569cd6">int</span><span style="color:#dcdcdc">               </span><span style="color:#dcdcdc">optimization_unused</span><span style="color:#b4b4b4">[</span><span style="color:#b5cea8">8</span><span style="color:#b4b4b4">]</span><span style="color:#b4b4b4">;</span><span style="color:#57a64a">// reserved for future use</span></div><div style="position:absolute;left:45.92px;top:589.94px;color:#999999">80</div><div style="position:absolute;left:100.2px;top:587.94px"><span style="color:#dcdcdc">   </span><span style="color:#57a64a">//---</span></div><div style="position:absolute;left:45.92px;top:606.78px;color:#999999">81</div><div style="position:absolute;left:100.2px;top:604.78px"><span style="color:#dcdcdc">   </span><span style="color:#569cd6">int</span><span style="color:#dcdcdc">               </span><span style="color:#dcdcdc">antiflood</span><span style="color:#b4b4b4">;</span><span style="color:#dcdcdc">             </span><span style="color:#57a64a">// enable antiflood control</span></div><div style="position:absolute;left:45.92px;top:623.61px;color:#999999">82</div><div style="position:absolute;left:100.2px;top:621.61px"><span style="color:#dcdcdc">   </span><span style="color:#569cd6">int</span><span style="color:#dcdcdc">               </span><span style="color:#dcdcdc">floodcontrol</span><span style="color:#b4b4b4">;</span><span style="color:#dcdcdc">          </span><span style="color:#57a64a">// max. antiflood connections</span></div><div style="position:absolute;left:45.92px;top:640.45px;color:#999999">83</div><div style="position:absolute;left:100.2px;top:638.45px"><span style="color:#dcdcdc">   </span><span style="color:#57a64a">//---</span></div><div style="position:absolute;left:45.92px;top:657.29px;color:#999999">84</div><div style="position:absolute;left:100.2px;top:655.29px"><span style="color:#dcdcdc">   </span><span style="color:#569cd6">int</span><span style="color:#dcdcdc">               </span><span style="color:#dcdcdc">liveupdate_mode</span><span style="color:#b4b4b4">;</span><span style="color:#dcdcdc">       </span><span style="color:#57a64a">// LiveUpdate mode (LIVE_UPDATE_NO,LIVE_UPDATE_ALL,LIVE_UPDATE_NO_SERVER)</span></div><div style="position:absolute;left:45.92px;top:674.13px;color:#999999">85</div><div style="position:absolute;left:100.2px;top:672.13px"><span style="color:#dcdcdc">   </span><span style="color:#57a64a">//---</span></div><div style="position:absolute;left:45.92px;top:690.96px;color:#999999">86</div><div style="position:absolute;left:100.2px;top:688.96px"><span style="color:#dcdcdc">   </span><span style="color:#569cd6">int</span><span style="color:#dcdcdc">               </span><span style="color:#dcdcdc">lastorder</span><span style="color:#b4b4b4">;</span><span style="color:#dcdcdc">             </span><span style="color:#57a64a">// last order's ticket     (read only)</span></div><div style="position:absolute;left:45.92px;top:707.80px;color:#999999">87</div><div style="position:absolute;left:100.2px;top:705.80px"><span style="color:#dcdcdc">   </span><span style="color:#569cd6">int</span><span style="color:#dcdcdc">               </span><span style="color:#dcdcdc">lastlogin</span><span style="color:#b4b4b4">;</span><span style="color:#dcdcdc">             </span><span style="color:#57a64a">// last account's number   (read only)</span></div><div style="position:absolute;left:45.92px;top:724.64px;color:#999999">88</div><div style="position:absolute;left:100.2px;top:722.64px"><span style="color:#dcdcdc">   </span><span style="color:#569cd6">int</span><span style="color:#dcdcdc">               </span><span style="color:#dcdcdc">lostlogin</span><span style="color:#b4b4b4">;</span><span style="color:#dcdcdc">             </span><span style="color:#57a64a">// lost commission's login (read only)</span></div><div style="position:absolute;left:45.92px;top:741.47px;color:#999999">89</div><div style="position:absolute;left:100.2px;top:739.47px"><span style="color:#dcdcdc">   </span><span style="color:#57a64a">//---</span></div><div style="position:absolute;left:45.92px;top:758.31px;color:#999999">90</div><div style="position:absolute;left:100.2px;top:756.31px"><span style="color:#dcdcdc">   </span><span style="color:#569cd6">int</span><span style="color:#dcdcdc">               </span><span style="color:#dcdcdc">rollovers_mode</span><span style="color:#b4b4b4">;</span><span style="color:#dcdcdc">        </span><span style="color:#57a64a">// rollover mode (ROLLOVER_NORMAL,ROLLOVER_REOPEN_BY_CLOSE_PRICE,ROLLOVER_REOPEN_BY_BID)</span></div><div style="position:absolute;left:45.92px;top:775.15px;color:#999999">91</div><div style="position:absolute;left:100.2px;top:773.15px"><span style="color:#dcdcdc">   </span><span style="color:#57a64a">//---</span></div><div style="position:absolute;left:45.92px;top:791.98px;color:#999999">92</div><div style="position:absolute;left:100.2px;top:789.98px"><span style="color:#dcdcdc">   </span><span style="color:#569cd6">char</span><span style="color:#dcdcdc">              </span><span style="color:#dcdcdc">path_database</span><span style="color:#b4b4b4">[</span><span style="color:#b5cea8">256</span><span style="color:#b4b4b4">]</span><span style="color:#b4b4b4">;</span><span style="color:#dcdcdc">    </span><span style="color:#57a64a">// path to databases</span></div><div style="position:absolute;left:45.92px;top:808.82px;color:#999999">93</div><div style="position:absolute;left:100.2px;top:806.82px"><span style="color:#dcdcdc">   </span><span style="color:#569cd6">char</span><span style="color:#dcdcdc">              </span><span style="color:#dcdcdc">path_history</span><span style="color:#b4b4b4">[</span><span style="color:#b5cea8">256</span><span style="color:#b4b4b4">]</span><span style="color:#b4b4b4">;</span><span style="color:#dcdcdc">     </span><span style="color:#57a64a">// path to history bases</span></div><div style="position:absolute;left:45.92px;top:825.66px;color:#999999">94</div><div style="position:absolute;left:100.2px;top:823.66px"><span style="color:#dcdcdc">   </span><span style="color:#569cd6">char</span><span style="color:#dcdcdc">              </span><span style="color:#dcdcdc">path_log</span><span style="color:#b4b4b4">[</span><span style="color:#b5cea8">256</span><span style="color:#b4b4b4">]</span><span style="color:#b4b4b4">;</span><span style="color:#dcdcdc">         </span><span style="color:#57a64a">// path to log</span></div><div style="position:absolute;left:45.92px;top:842.50px;color:#999999">95</div><div style="position:absolute;left:100.2px;top:840.50px"><span style="color:#dcdcdc">   </span><span style="color:#57a64a">//--- overnigths</span></div><div style="position:absolute;left:45.92px;top:859.33px;color:#999999">96</div><div style="position:absolute;left:100.2px;top:857.33px"><span style="color:#dcdcdc">   </span><span style="color:#4ec9b0">__time32_t</span><span style="color:#dcdcdc">        </span><span style="color:#dcdcdc">overnight_last_day</span><span style="color:#b4b4b4">;</span><span style="color:#dcdcdc">    </span><span style="color:#57a64a">// day of last overnight</span></div><div style="position:absolute;left:45.92px;top:876.17px;color:#999999">97</div><div style="position:absolute;left:100.2px;top:874.17px"><span style="color:#dcdcdc">   </span><span style="color:#4ec9b0">__time32_t</span><span style="color:#dcdcdc">        </span><span style="color:#dcdcdc">overnight_last_time</span><span style="color:#b4b4b4">;</span><span style="color:#dcdcdc">   </span><span style="color:#57a64a">// time of last overnight</span></div><div style="position:absolute;left:45.92px;top:893.01px;color:#999999">98</div><div style="position:absolute;left:100.2px;top:891.01px"><span style="color:#dcdcdc">   </span><span style="color:#4ec9b0">__time32_t</span><span style="color:#dcdcdc">        </span><span style="color:#dcdcdc">overnight_prev_time</span><span style="color:#b4b4b4">;</span><span style="color:#dcdcdc">   </span><span style="color:#57a64a">// time of next to last overnight</span></div><div style="position:absolute;left:45.92px;top:909.84px;color:#999999">99</div><div style="position:absolute;left:100.2px;top:907.84px"><span style="color:#dcdcdc">   </span><span style="color:#57a64a">//--- month reports</span></div><div style="position:absolute;left:38.38px;top:926.68px;color:#999999">100</div><div style="position:absolute;left:100.2px;top:924.68px"><span style="color:#dcdcdc">   </span><span style="color:#4ec9b0">__time32_t</span><span style="color:#dcdcdc">        </span><span style="color:#dcdcdc">overmonth_last_month</span><span style="color:#b4b4b4">;</span><span style="color:#dcdcdc">  </span><span style="color:#57a64a">// month of last report</span></div><div style="position:absolute;left:38.38px;top:943.52px;color:#999999">101</div><div style="position:absolute;left:100.2px;top:941.52px"><span style="color:#dcdcdc">   </span><span style="color:#57a64a">//--- performance base</span></div><div style="position:absolute;left:38.38px;top:960.35px;color:#999999">102</div><div style="position:absolute;left:100.2px;top:958.35px"><span style="color:#dcdcdc">   </span><span style="color:#569cd6">char</span><span style="color:#dcdcdc">              </span><span style="color:#dcdcdc">adapters</span><span style="color:#b4b4b4">[</span><span style="color:#b5cea8">256</span><span style="color:#b4b4b4">]</span><span style="color:#b4b4b4">;</span><span style="color:#dcdcdc">         </span><span style="color:#57a64a">// network adapters list (read-only)</span></div><div style="position:absolute;left:38.38px;top:977.19px;color:#999999">103</div><div style="position:absolute;left:100.2px;top:975.19px"><span style="color:#dcdcdc">   </span><span style="color:#4ec9b0">ULONG</span><span style="color:#dcdcdc">             </span><span style="color:#dcdcdc">bind_adresses</span><span style="color:#b4b4b4">[</span><span style="color:#b5cea8">8</span><span style="color:#b4b4b4">]</span><span style="color:#b4b4b4">;</span><span style="color:#dcdcdc">      </span><span style="color:#57a64a">// array of avaible IP addresses</span></div><div style="position:absolute;left:38.38px;top:994.03px;color:#999999">104</div><div style="position:absolute;left:100.2px;top:992.03px"><span style="color:#dcdcdc">   </span><span style="color:#569cd6">short</span><span style="color:#dcdcdc">             </span><span style="color:#dcdcdc">server_version</span><span style="color:#b4b4b4">;</span><span style="color:#dcdcdc">        </span><span style="color:#57a64a">// server version</span></div><div style="position:absolute;left:38.38px;top:1010.87px;color:#999999">105</div><div style="position:absolute;left:100.2px;top:1008.87px"><span style="color:#dcdcdc">   </span><span style="color:#569cd6">short</span><span style="color:#dcdcdc">             </span><span style="color:#dcdcdc">server_build</span><span style="color:#b4b4b4">;</span><span style="color:#dcdcdc">          </span><span style="color:#57a64a">// server build</span></div><div style="position:absolute;left:38.38px;top:1027.70px;color:#999999">106</div><div style="position:absolute;left:100.2px;top:1025.70px"><span style="color:#dcdcdc">   </span><span style="color:#4ec9b0">ULONG</span><span style="color:#dcdcdc">             </span><span style="color:#dcdcdc">web_adresses</span><span style="color:#b4b4b4">[</span><span style="color:#b5cea8">8</span><span style="color:#b4b4b4">]</span><span style="color:#b4b4b4">;</span><span style="color:#dcdcdc">       </span><span style="color:#57a64a">// web services access list (comma separated IP addresses)</span></div><div style="position:absolute;left:38.38px;top:1044.54px;color:#999999">107</div><div style="position:absolute;left:100.2px;top:1042.54px"><span style="color:#dcdcdc">   </span><span style="color:#569cd6">int</span><span style="color:#dcdcdc">               </span><span style="color:#dcdcdc">statement_mode</span><span style="color:#b4b4b4">;</span><span style="color:#dcdcdc">        </span><span style="color:#57a64a">// statement generation time (STATEMENT_END_DAY,STATEMENT_START_DAY)</span></div><div style="position:absolute;left:38.38px;top:1061.38px;color:#999999">108</div><div style="position:absolute;left:100.2px;top:1059.38px"><span style="color:#dcdcdc">   </span><span style="color:#569cd6">int</span><span style="color:#dcdcdc">               </span><span style="color:#dcdcdc">monthly_state_mode</span><span style="color:#b4b4b4">;</span><span style="color:#dcdcdc">    </span><span style="color:#57a64a">// monthly statement generation day (MONTHLY_STATEMENT_END_MONTH,MONTHLY_STATEMENT_START_MONTH)</span></div><div style="position:absolute;left:38.38px;top:1078.21px;color:#999999">109</div><div style="position:absolute;left:100.2px;top:1076.21px"><span style="color:#dcdcdc">   </span><span style="color:#569cd6">int</span><span style="color:#dcdcdc">               </span><span style="color:#dcdcdc">keepticks</span><span style="color:#b4b4b4">;</span><span style="color:#dcdcdc">             </span><span style="color:#57a64a">// ticks keep period</span></div><div style="position:absolute;left:38.38px;top:1095.05px;color:#999999">110</div><div style="position:absolute;left:100.2px;top:1093.05px"><span style="color:#dcdcdc">   </span><span style="color:#569cd6">int</span><span style="color:#dcdcdc">               </span><span style="color:#dcdcdc">statement_weekend</span><span style="color:#b4b4b4">;</span><span style="color:#dcdcdc">     </span><span style="color:#57a64a">// generate statements at weekends</span></div><div style="position:absolute;left:38.38px;top:1111.89px;color:#999999">111</div><div style="position:absolute;left:100.2px;top:1109.89px"><span style="color:#dcdcdc">   </span><span style="color:#4ec9b0">__time32_t</span><span style="color:#dcdcdc">        </span><span style="color:#dcdcdc">last_activate</span><span style="color:#b4b4b4">;</span><span style="color:#dcdcdc">         </span><span style="color:#57a64a">// last activation datetime</span></div><div style="position:absolute;left:38.38px;top:1128.72px;color:#999999">112</div><div style="position:absolute;left:100.2px;top:1126.72px"><span style="color:#dcdcdc">   </span><span style="color:#4ec9b0">__time32_t</span><span style="color:#dcdcdc">        </span><span style="color:#dcdcdc">stop_last</span><span style="color:#b4b4b4">;</span><span style="color:#dcdcdc">             </span><span style="color:#57a64a">// last stop datetime</span></div><div style="position:absolute;left:38.38px;top:1145.56px;color:#999999">113</div><div style="position:absolute;left:100.2px;top:1143.56px"><span style="color:#dcdcdc">   </span><span style="color:#569cd6">int</span><span style="color:#dcdcdc">               </span><span style="color:#dcdcdc">stop_delay</span><span style="color:#b4b4b4">;</span><span style="color:#dcdcdc">            </span><span style="color:#57a64a">// last stop delay</span></div><div style="position:absolute;left:38.38px;top:1162.40px;color:#999999">114</div><div style="position:absolute;left:100.2px;top:1160.40px"><span style="color:#dcdcdc">   </span><span style="color:#569cd6">int</span><span style="color:#dcdcdc">               </span><span style="color:#dcdcdc">stop_reason</span><span style="color:#b4b4b4">;</span><span style="color:#dcdcdc">           </span><span style="color:#57a64a">// last stop reason</span></div><div style="position:absolute;left:38.38px;top:1179.24px;color:#999999">115</div><div style="position:absolute;left:100.2px;top:1177.24px"><span style="color:#dcdcdc">   </span><span style="color:#569cd6">char</span><span style="color:#dcdcdc">              </span><span style="color:#dcdcdc">account_url</span><span style="color:#b4b4b4">[</span><span style="color:#b5cea8">128</span><span style="color:#b4b4b4">]</span><span style="color:#b4b4b4">;</span><span style="color:#dcdcdc">      </span><span style="color:#57a64a">// account allocation URL</span></div><div style="position:absolute;left:38.38px;top:1196.07px;color:#999999">116</div><div style="position:absolute;left:100.2px;top:1194.07px"><span style="color:#dcdcdc">   </span><span style="color:#569cd6">int</span><span style="color:#dcdcdc">               </span><span style="color:#dcdcdc">reserved</span><span style="color:#b4b4b4">[</span><span style="color:#b5cea8">16</span><span style="color:#b4b4b4">]</span><span style="color:#b4b4b4">;</span></div><div style="position:absolute;left:38.38px;top:1212.91px;color:#999999">117</div><div style="position:absolute;left:100.2px;top:1210.91px"><span style="color:#dcdcdc">  </span><span style="color:#b4b4b4">};</span></div><div style="position:absolute;left:38.38px;top:1229.75px;color:#999999">118</div><div style="position:absolute;left:100.2px;top:1227.75px"><span style="color:#57a64a">//--- deno-accounts type</span></div><div style="position:absolute;left:38.38px;top:1246.58px;color:#999999">119</div><div style="position:absolute;left:100.2px;top:1244.58px"><span style="color:#569cd6">enum</span><span style="color:#dcdcdc"> </span><span style="color:#b4b4b4">{</span><span style="color:#dcdcdc"> </span><span style="color:#b8d7a3">DEMO_DISABLED</span><span style="color:#b4b4b4">,</span><span style="color:#dcdcdc"> </span><span style="color:#b8d7a3">DEMO_PROLONG</span><span style="color:#b4b4b4">,</span><span style="color:#dcdcdc"> </span><span style="color:#b8d7a3">DEMO_FIXED</span><span style="color:#dcdcdc"> </span><span style="color:#b4b4b4">};</span></div><div style="position:absolute;left:38.38px;top:1263.42px;color:#999999">120</div><div style="position:absolute;left:100.2px;top:1261.42px"><span style="color:#57a64a">//--- rollover mode</span></div><div style="position:absolute;left:38.38px;top:1280.26px;color:#999999">121</div><div style="position:absolute;left:100.2px;top:1278.26px"><span style="color:#569cd6">enum</span><span style="color:#dcdcdc"> </span><span style="color:#b4b4b4">{</span><span style="color:#dcdcdc"> </span><span style="color:#b8d7a3">ROLLOVER_NORMAL</span><span style="color:#b4b4b4">,</span><span style="color:#dcdcdc"> </span><span style="color:#b8d7a3">ROLLOVER_REOPEN_BY_CLOSE_PRICE</span><span style="color:#b4b4b4">,</span><span style="color:#dcdcdc"> </span><span style="color:#b8d7a3">ROLLOVER_REOPEN_BY_BID</span><span style="color:#dcdcdc"> </span><span style="color:#b4b4b4">};</span></div><div style="position:absolute;left:38.38px;top:1297.09px;color:#999999">122</div><div style="position:absolute;left:100.2px;top:1295.09px"><span style="color:#57a64a">//--- LiveUpdate mode</span></div><div style="position:absolute;left:38.38px;top:1313.93px;color:#999999">123</div><div style="position:absolute;left:100.2px;top:1311.93px"><span style="color:#569cd6">enum</span><span style="color:#dcdcdc"> </span><span style="color:#b4b4b4">{</span><span style="color:#dcdcdc"> </span><span style="color:#b8d7a3">LIVE_UPDATE_NO</span><span style="color:#b4b4b4">=</span><span style="color:#b5cea8">0</span><span style="color:#b4b4b4">,</span><span style="color:#dcdcdc"> </span><span style="color:#b8d7a3">LIVE_UPDATE_RELEASE</span><span style="color:#b4b4b4">=</span><span style="color:#b5cea8">1</span><span style="color:#b4b4b4">,</span><span style="color:#dcdcdc"> </span><span style="color:#b8d7a3">LIVE_UPDATE_NO_SERVER</span><span style="color:#b4b4b4">=</span><span style="color:#b5cea8">2</span><span style="color:#b4b4b4">,</span><span style="color:#dcdcdc"> </span><span style="color:#b8d7a3">LIVE_UPDATE_BETA</span><span style="color:#b4b4b4">=</span><span style="color:#b5cea8">3</span><span style="color:#dcdcdc"> </span><span style="color:#b4b4b4">};</span></div></div>
<div style="position:absolute;left:94px;top:116px;width:1px;height:50.51px;background:#a5a5a5;"></div>
<div style="position:absolute;left:94px;top:165.51px;width:4px;height:1px;background:#a5a5a5;"></div>
<div style="position:absolute;left:94px;top:179px;width:1px;height:1048.24px;background:#a5a5a5;"></div>
<div style="position:absolute;left:94px;top:1226.24px;width:4px;height:1px;background:#a5a5a5;"></div>
<div style="position:absolute;left:89px;top:389px;width:9px;height:9px;box-sizing:border-box;border:1px solid #a5a5a5;background:#1e1e1e"></div>
<div style="position:absolute;left:91px;top:393px;width:5px;height:1px;background:#e8e8e8;"></div>
<div style="position:absolute;left:89px;top:490px;width:9px;height:9px;box-sizing:border-box;border:1px solid #a5a5a5;background:#1e1e1e"></div>
<div style="position:absolute;left:91px;top:494px;width:5px;height:1px;background:#e8e8e8;"></div>
<div style="position:absolute;left:89px;top:575px;width:9px;height:9px;box-sizing:border-box;border:1px solid #a5a5a5;background:#1e1e1e"></div>
<div style="position:absolute;left:91px;top:579px;width:5px;height:1px;background:#e8e8e8;"></div>
<div style="position:absolute;left:89px;top:625px;width:9px;height:9px;box-sizing:border-box;border:1px solid #a5a5a5;background:#1e1e1e"></div>
<div style="position:absolute;left:91px;top:629px;width:5px;height:1px;background:#e8e8e8;"></div>
<div style="position:absolute;left:89px;top:659px;width:9px;height:9px;box-sizing:border-box;border:1px solid #a5a5a5;background:#1e1e1e"></div>
<div style="position:absolute;left:91px;top:663px;width:5px;height:1px;background:#e8e8e8;"></div>
<div style="position:absolute;left:89px;top:726px;width:9px;height:9px;box-sizing:border-box;border:1px solid #a5a5a5;background:#1e1e1e"></div>
<div style="position:absolute;left:91px;top:730px;width:5px;height:1px;background:#e8e8e8;"></div>
<div style="position:absolute;left:89px;top:760px;width:9px;height:9px;box-sizing:border-box;border:1px solid #a5a5a5;background:#1e1e1e"></div>
<div style="position:absolute;left:91px;top:764px;width:5px;height:1px;background:#e8e8e8;"></div>
<div style="position:absolute;left:89px;top:827px;width:9px;height:9px;box-sizing:border-box;border:1px solid #a5a5a5;background:#1e1e1e"></div>
<div style="position:absolute;left:91px;top:831px;width:5px;height:1px;background:#e8e8e8;"></div>
<div style="position:absolute;left:89px;top:894px;width:9px;height:9px;box-sizing:border-box;border:1px solid #a5a5a5;background:#1e1e1e"></div>
<div style="position:absolute;left:91px;top:898px;width:5px;height:1px;background:#e8e8e8;"></div>
<div style="position:absolute;left:89px;top:928px;width:9px;height:9px;box-sizing:border-box;border:1px solid #a5a5a5;background:#1e1e1e"></div>
<div style="position:absolute;left:91px;top:932px;width:5px;height:1px;background:#e8e8e8;"></div>
<div style="position:absolute;left:94px;top:418.07px;width:4px;height:1px;background:#a5a5a5;"></div>
<div style="position:absolute;left:94px;top:519.09px;width:4px;height:1px;background:#a5a5a5;"></div>
<div style="position:absolute;left:94px;top:603.27px;width:4px;height:1px;background:#a5a5a5;"></div>
<div style="position:absolute;left:94px;top:653.78px;width:4px;height:1px;background:#a5a5a5;"></div>
<div style="position:absolute;left:94px;top:687.46px;width:4px;height:1px;background:#a5a5a5;"></div>
<div style="position:absolute;left:94px;top:754.81px;width:4px;height:1px;background:#a5a5a5;"></div>
<div style="position:absolute;left:94px;top:788.48px;width:4px;height:1px;background:#a5a5a5;"></div>
<div style="position:absolute;left:94px;top:855.83px;width:4px;height:1px;background:#a5a5a5;"></div>
<div style="position:absolute;left:94px;top:923.18px;width:4px;height:1px;background:#a5a5a5;"></div>
<div style="position:absolute;left:94px;top:956.85px;width:4px;height:1px;background:#a5a5a5;"></div>
<div style="position:absolute;left:89px;top:170px;width:9px;height:9px;box-sizing:border-box;border:1px solid #a5a5a5;background:#1e1e1e"></div>
<div style="position:absolute;left:91px;top:174px;width:5px;height:1px;background:#e8e8e8;"></div>
<div style="position:absolute;left:102px;top:183.35px;width:1px;height:1043.89px;background:repeating-linear-gradient(to bottom,#9a9a9a 0 3px,transparent 3px 5px)"></div>
<div style="position:absolute;left:154px;top:180px;width:1.5px;height:1.5px;background:#9a9a9a;"></div>
<div style="position:absolute;left:158px;top:180px;width:1.5px;height:1.5px;background:#9a9a9a;"></div>
<div style="position:absolute;left:162px;top:180px;width:1.5px;height:1.5px;background:#9a9a9a;"></div>
<div style="position:absolute;left:2254px;top:116px;width:20px;height:1204px;background:#2e2e2e;"></div>
<div style="position:absolute;left:2273px;top:116px;width:1px;height:1204px;background:#3c3c3c;"></div>
<svg style="position:absolute;left:2259px;top:121px;" width="10" height="6" viewBox="0 0 10 6"><path d="M0 5.5 L5 0.5 L10 5.5 Z" fill="#9e9e9e"/></svg>
<svg style="position:absolute;left:2259px;top:1309px;" width="10" height="6" viewBox="0 0 10 6"><path d="M0 0.5 L5 5.5 L10 0.5 Z" fill="#9e9e9e"/></svg>
<div style="position:absolute;left:2258px;top:164px;width:11px;height:43px;background:#4f4f4f;"></div>
<div style="position:absolute;left:2267px;top:137px;width:6px;height:7px;background:#9b9b9b;"></div>
<div style="position:absolute;left:2267px;top:163px;width:6px;height:6px;background:#9b9b9b;"></div>
<div style="position:absolute;left:2267px;top:210px;width:6px;height:6px;background:#9b9b9b;"></div>
<div style="position:absolute;left:2267px;top:218px;width:6px;height:6px;background:#9b9b9b;"></div>
<div style="position:absolute;left:2267px;top:227px;width:6px;height:11px;background:#9b9b9b;"></div>
<div style="position:absolute;left:2267px;top:264px;width:6px;height:6px;background:#9b9b9b;"></div>
<div style="position:absolute;left:2267px;top:278px;width:6px;height:7px;background:#9b9b9b;"></div>
<div style="position:absolute;left:2267px;top:296px;width:6px;height:6px;background:#9b9b9b;"></div>
<div style="position:absolute;left:2267px;top:309px;width:6px;height:6px;background:#9b9b9b;"></div>
<div style="position:absolute;left:2267px;top:356px;width:6px;height:6px;background:#9b9b9b;"></div>
<div style="position:absolute;left:2267px;top:365px;width:6px;height:12px;background:#9b9b9b;"></div>
<div style="position:absolute;left:2267px;top:395px;width:6px;height:14px;background:#9b9b9b;"></div>
<div style="position:absolute;left:2267px;top:429px;width:6px;height:20px;background:#9b9b9b;"></div>
<div style="position:absolute;left:2267px;top:496px;width:6px;height:12px;background:#9b9b9b;"></div>
<div style="position:absolute;left:2267px;top:515px;width:6px;height:23px;background:#9b9b9b;"></div>
<div style="position:absolute;left:2267px;top:540px;width:6px;height:6px;background:#9b9b9b;"></div>
<div style="position:absolute;left:2267px;top:551px;width:6px;height:6px;background:#9b9b9b;"></div>
<div style="position:absolute;left:2267px;top:559px;width:6px;height:6px;background:#9b9b9b;"></div>
<div style="position:absolute;left:2267px;top:611px;width:6px;height:6px;background:#9b9b9b;"></div>
<div style="position:absolute;left:2267px;top:620px;width:6px;height:12px;background:#9b9b9b;"></div>
<div style="position:absolute;left:2267px;top:637px;width:6px;height:10px;background:#9b9b9b;"></div>
<div style="position:absolute;left:2267px;top:649px;width:6px;height:6px;background:#9b9b9b;"></div>
<div style="position:absolute;left:2267px;top:657px;width:6px;height:6px;background:#9b9b9b;"></div>
<div style="position:absolute;left:2267px;top:664px;width:6px;height:7px;background:#9b9b9b;"></div>
<div style="position:absolute;left:2267px;top:672px;width:6px;height:7px;background:#9b9b9b;"></div>
<div style="position:absolute;left:2267px;top:686px;width:6px;height:15px;background:#9b9b9b;"></div>
<div style="position:absolute;left:2267px;top:730px;width:6px;height:6px;background:#9b9b9b;"></div>
<div style="position:absolute;left:2267px;top:739px;width:6px;height:13px;background:#9b9b9b;"></div>
<div style="position:absolute;left:2267px;top:791px;width:6px;height:13px;background:#9b9b9b;"></div>
<div style="position:absolute;left:2267px;top:835px;width:6px;height:6px;background:#9b9b9b;"></div>
<div style="position:absolute;left:2267px;top:847px;width:6px;height:6px;background:#9b9b9b;"></div>
<div style="position:absolute;left:2267px;top:863px;width:6px;height:6px;background:#9b9b9b;"></div>
<div style="position:absolute;left:2267px;top:871px;width:6px;height:6px;background:#9b9b9b;"></div>
<div style="position:absolute;left:2267px;top:885px;width:6px;height:20px;background:#9b9b9b;"></div>
<div style="position:absolute;left:2267px;top:914px;width:6px;height:6px;background:#9b9b9b;"></div>
<div style="position:absolute;left:2267px;top:928px;width:6px;height:20px;background:#9b9b9b;"></div>
<div style="position:absolute;left:2267px;top:951px;width:6px;height:12px;background:#9b9b9b;"></div>
<div style="position:absolute;left:2267px;top:967px;width:6px;height:6px;background:#9b9b9b;"></div>
<div style="position:absolute;left:2267px;top:979px;width:6px;height:6px;background:#9b9b9b;"></div>
<div style="position:absolute;left:2267px;top:996px;width:6px;height:7px;background:#9b9b9b;"></div>
<div style="position:absolute;left:2267px;top:1020px;width:6px;height:6px;background:#9b9b9b;"></div>
<div style="position:absolute;left:2267px;top:1050px;width:6px;height:7px;background:#9b9b9b;"></div>
<div style="position:absolute;left:2267px;top:1204px;width:6px;height:7px;background:#9b9b9b;"></div>
<div style="position:absolute;left:2254px;top:131px;width:19px;height:2px;background:#e8e8e8;"></div>
<div style="position:absolute;left:5px;top:1320px;width:2269px;height:18px;background:#3e3e3e;"></div>
<div style="position:absolute;left:6px;top:1320.5px;width:2267px;height:16px;background:#2e2e2e;"></div>
<div style="position:absolute;left:6px;top:1321px;width:59px;height:15px;box-sizing:border-box;background:#333333;border:1px solid #3c3c3c"></div>
<div style="position:absolute;left:7.3px;top:1321.74px;font-family:'Liberation Sans', sans-serif;font-size:12px;line-height:normal;color:#f1f1f1;font-weight:normal;letter-spacing:-0.45px;white-space:pre;">99 %</div>
<svg style="position:absolute;left:57px;top:1328px;" width="7" height="4" viewBox="0 0 7 4"><path d="M0 0 H7 L3.5 3.5 Z" fill="#d0d0d0"/></svg>
<svg style="position:absolute;left:68px;top:1322px;" width="14" height="14" viewBox="0 0 14 14"><path d="M3 13 C2 11 1.5 9 2 7 C2.5 3 5 1 8 1 C11 1 13 3.5 13 6.5 C13 9 11.5 11 10 12 L10 13" fill="none" stroke="#b180d7" stroke-width="1.4"/><path d="M1 12 L4.5 8.5 M6 8 L8 6" stroke="#b180d7" stroke-width="2"/><circle cx="8" cy="5.5" r="1.7" fill="#b180d7"/></svg>
<svg style="position:absolute;left:108px;top:1322px;" width="13" height="13" viewBox="0 0 13 13"><circle cx="6.5" cy="6.5" r="6" fill="#8ee38f"/><path d="M3.5 6.7 L5.7 8.9 L9.6 4.6" fill="none" stroke="#111" stroke-width="1.2"/></svg>
<div style="position:absolute;left:125.7px;top:1321.74px;font-family:'Liberation Sans', sans-serif;font-size:12px;line-height:normal;color:#f1f1f1;font-weight:normal;letter-spacing:-0.267px;white-space:pre;">No issues found</div>
<div style="position:absolute;left:279px;top:1321px;width:196px;height:15px;background:#333333;"></div>
<svg style="position:absolute;left:289px;top:1322px;" width="8" height="14" viewBox="0 0 8 14"><path d="M7 0.5 L1 7 L7 13.5" fill="none" stroke="#d0d0d0" stroke-width="1.1"/></svg>
<div style="position:absolute;left:300.6px;top:1321.74px;font-family:'Liberation Sans', sans-serif;font-size:12px;line-height:normal;color:#f1f1f1;font-weight:normal;letter-spacing:-0.298px;white-space:pre;">0 changes | 0 authors, 0 changes</div>
<svg style="position:absolute;left:480px;top:1324px;" width="6" height="10" viewBox="0 0 6 10"><path d="M6 0 V10 L0 5 Z" fill="#7a7a7a"/></svg>
<div style="position:absolute;left:2072px;top:1321px;width:18px;height:15px;background:#333333;"></div>
<svg style="position:absolute;left:2079px;top:1325px;" width="6" height="9" viewBox="0 0 6 9"><path d="M0 0 V9 L5.5 4.5 Z" fill="#7a7a7a"/></svg>
<div style="position:absolute;left:2111.35px;top:1321.74px;font-family:'Liberation Sans', sans-serif;font-size:12px;line-height:normal;color:#f1f1f1;font-weight:normal;letter-spacing:-0.45px;white-space:pre;">Ln: 1</div>
<div style="position:absolute;left:2153.31px;top:1321.74px;font-family:'Liberation Sans', sans-serif;font-size:12px;line-height:normal;color:#f1f1f1;font-weight:normal;letter-spacing:-0.45px;white-space:pre;">Ch: 1</div>
<div style="position:absolute;left:2189px;top:1321px;width:38px;height:15px;box-sizing:border-box;border:1px solid #3e3e3e;"></div>
<div style="position:absolute;left:2196.37px;top:1321.74px;font-family:'Liberation Sans', sans-serif;font-size:12px;line-height:normal;color:#f1f1f1;font-weight:normal;letter-spacing:-0.45px;white-space:pre;">SPC</div>
<div style="position:absolute;left:2228px;top:1321px;width:45px;height:15px;box-sizing:border-box;border:1px solid #3e3e3e;"></div>
<div style="position:absolute;left:2235.32px;top:1321.74px;font-family:'Liberation Sans', sans-serif;font-size:12px;line-height:normal;color:#f1f1f1;font-weight:normal;letter-spacing:-0.45px;white-space:pre;">CRLF</div>
<div style="position:absolute;left:5.5px;top:1344.84px;font-family:'Liberation Sans', sans-serif;font-size:12px;line-height:normal;color:#c8c8c8;font-weight:normal;letter-spacing:-0.351px;white-space:pre;">Error List</div>
<div style="position:absolute;left:63.7px;top:1344.84px;font-family:'Liberation Sans', sans-serif;font-size:12px;line-height:normal;color:#c8c8c8;font-weight:normal;letter-spacing:0.26px;white-space:pre;">Output</div>
<div style="position:absolute;left:113.0px;top:1344.84px;font-family:'Liberation Sans', sans-serif;font-size:12px;line-height:normal;color:#c8c8c8;font-weight:normal;letter-spacing:-0.252px;white-space:pre;">Find Symbol Results</div>
<div style="position:absolute;left:5px;top:1363px;width:46px;height:6px;background:#363636;"></div>
<div style="position:absolute;left:63px;top:1363px;width:38px;height:6px;background:#363636;"></div>
<div style="position:absolute;left:113px;top:1363px;width:106px;height:6px;background:#363636;"></div>
<div style="position:absolute;left:0px;top:1369px;width:2559px;height:24px;background:#404040;"></div>
<svg style="position:absolute;left:3px;top:1373px;" width="17" height="17" viewBox="0 0 17 17"><path d="M0.5 0.5 H15.5 V11.5 H10.5 L8 14.5 L5.5 11.5 H0.5 Z" fill="#4a4a4a" stroke="#e0e0e0"/></svg>
<div style="position:absolute;left:26.36px;top:1373.64px;font-family:'Liberation Sans', sans-serif;font-size:12px;line-height:normal;color:#f1f1f1;font-weight:normal;letter-spacing:-0.45px;white-space:pre;">Ready</div>
<svg style="position:absolute;left:2130px;top:1374px;" width="14" height="14" viewBox="0 0 14 14"><path d="M3.5 13.5 V1 M1 3.5 L3.5 1 L6 3.5 M10.5 0.5 V13 M8 10.5 L10.5 13 L13 10.5" fill="none" stroke="#e0e0e0" stroke-width="1.1"/></svg>
<div style="position:absolute;left:2151.6px;top:1373.64px;font-family:'Liberation Sans', sans-serif;font-size:12px;line-height:normal;color:#f1f1f1;font-weight:normal;letter-spacing:-0.135px;white-space:pre;">0 / 0</div>
<svg style="position:absolute;left:2180px;top:1380px;" width="9" height="5" viewBox="0 0 9 5"><path d="M0 4.5 L4.5 0 L9 4.5 Z" fill="#f0f0f0"/></svg>
<svg style="position:absolute;left:2211px;top:1374px;" width="14" height="14" viewBox="0 0 14 14"><path d="M1.5 12.5 L2.5 9 L10 1.5 L12.5 4 L5 11.5 Z M1.5 12.5 L5 11.5" fill="none" stroke="#e0e0e0" stroke-width="1.1"/></svg>
<div style="position:absolute;left:2231.87px;top:1373.64px;font-family:'Liberation Sans', sans-serif;font-size:12px;line-height:normal;color:#f1f1f1;font-weight:normal;letter-spacing:-0.45px;white-space:pre;">10</div>
<svg style="position:absolute;left:2267px;top:1374px;" width="14" height="15" viewBox="0 0 14 15"><circle cx="2.8" cy="2.8" r="2" fill="none" stroke="#e0e0e0"/><circle cx="2.8" cy="12.2" r="2" fill="none" stroke="#e0e0e0"/><circle cx="11" cy="4.5" r="2" fill="none" stroke="#e0e0e0"/><path d="M2.8 4.8 V10.2 M11 6.5 C11 9 8 9.5 3.5 10.5" fill="none" stroke="#e0e0e0"/></svg>
<div style="position:absolute;left:2288.0px;top:1373.64px;font-family:'Liberation Sans', sans-serif;font-size:12px;line-height:normal;color:#f1f1f1;font-weight:normal;letter-spacing:-0.132px;white-space:pre;">master</div>
<svg style="position:absolute;left:2330px;top:1380px;" width="9" height="5" viewBox="0 0 9 5"><path d="M0 4.5 L4.5 0 L9 4.5 Z" fill="#f0f0f0"/></svg>
<svg style="position:absolute;left:2366px;top:1374px;" width="16" height="16" viewBox="0 0 16 16"><path d="M1 0.5 H13.5 V2.5 H1 Z M2.5 2.5 V13.5 H6 M12 2.5 V7 M5 2.5 V9 M8 2.5 V7" fill="none" stroke="#e0e0e0"/><circle cx="10.5" cy="12" r="3.5" fill="#5fcf65"/><path d="M10.5 14 V10 M9 11.5 L10.5 10 L12 11.5" stroke="#1e1e1e" stroke-width="1"/></svg>
<div style="position:absolute;left:2388.6px;top:1373.64px;font-family:'Liberation Sans', sans-serif;font-size:12px;line-height:normal;color:#f1f1f1;font-weight:normal;letter-spacing:0.104px;white-space:pre;">mt4-micro-service</div>
<svg style="position:absolute;left:2492px;top:1380px;" width="9" height="5" viewBox="0 0 9 5"><path d="M0 4.5 L4.5 0 L9 4.5 Z" fill="#f0f0f0"/></svg>
<svg style="position:absolute;left:2521px;top:1373px;" width="18" height="18" viewBox="0 0 18 18"><path d="M1.5 12 C2.5 11 2.5 9.5 2.5 7 C2.5 3.5 4.5 1.5 7 1.5 C9.5 1.5 11.5 3.5 11.5 7 C11.5 9.5 11.5 11 12.5 12 Z" fill="none" stroke="#d0d0d0"/><circle cx="13.5" cy="12.5" r="5" fill="#f78a9a"/><text x="11.6" y="16" font-family="Liberation Sans" font-size="9" fill="#111">1</text></svg>
<div style="position:absolute;left:2280px;top:73px;width:273px;height:1264px;background:#1f1f1f;"></div>
<div style="position:absolute;left:2280px;top:73px;width:1px;height:1244px;background:#3f3f3f;"></div>
<div style="position:absolute;left:2552px;top:73px;width:1px;height:1244px;background:#3f3f3f;"></div>
<div style="position:absolute;left:2281px;top:73px;width:272px;height:2px;background:#7e6ff0;"></div>
<div style="position:absolute;left:2285.7px;top:77.14px;font-family:'Liberation Sans', sans-serif;font-size:12px;line-height:normal;color:#f1f1f1;font-weight:normal;letter-spacing:-0.442px;white-space:pre;">Solution Explorer</div>
<svg style="position:absolute;left:2383px;top:81px;" width="92" height="6" viewBox="0 0 92 6"><rect x="0" y="0" width="1" height="1" fill="#505050"/><rect x="4" y="0" width="1" height="1" fill="#505050"/><rect x="8" y="0" width="1" height="1" fill="#505050"/><rect x="12" y="0" width="1" height="1" fill="#505050"/><rect x="16" y="0" width="1" height="1" fill="#505050"/><rect x="20" y="0" width="1" height="1" fill="#505050"/><rect x="24" y="0" width="1" height="1" fill="#505050"/><rect x="28" y="0" width="1" height="1" fill="#505050"/><rect x="32" y="0" width="1" height="1" fill="#505050"/><rect x="36" y="0" width="1" height="1" fill="#505050"/><rect x="40" y="0" width="1" height="1" fill="#505050"/><rect x="44" y="0" width="1" height="1" fill="#505050"/><rect x="48" y="0" width="1" height="1" fill="#505050"/><rect x="52" y="0" width="1" height="1" fill="#505050"/><rect x="56" y="0" width="1" height="1" fill="#505050"/><rect x="60" y="0" width="1" height="1" fill="#505050"/><rect x="64" y="0" width="1" height="1" fill="#505050"/><rect x="68" y="0" width="1" height="1" fill="#505050"/><rect x="72" y="0" width="1" height="1" fill="#505050"/><rect x="76" y="0" width="1" height="1" fill="#505050"/><rect x="80" y="0" width="1" height="1" fill="#505050"/><rect x="84" y="0" width="1" height="1" fill="#505050"/><rect x="88" y="0" width="1" height="1" fill="#505050"/><rect x="2" y="2" width="1" height="1" fill="#505050"/><rect x="6" y="2" width="1" height="1" fill="#505050"/><rect x="10" y="2" width="1" height="1" fill="#505050"/><rect x="14" y="2" width="1" height="1" fill="#505050"/><rect x="18" y="2" width="1" height="1" fill="#505050"/><rect x="22" y="2" width="1" height="1" fill="#505050"/><rect x="26" y="2" width="1" height="1" fill="#505050"/><rect x="30" y="2" width="1" height="1" fill="#505050"/><rect x="34" y="2" width="1" height="1" fill="#505050"/><rect x="38" y="2" width="1" height="1" fill="#505050"/><rect x="42" y="2" width="1" height="1" fill="#505050"/><rect x="46" y="2" width="1" height="1" fill="#505050"/><rect x="50" y="2" width="1" height="1" fill="#505050"/><rect x="54" y="2" width="1" height="1" fill="#505050"/><rect x="58" y="2" width="1" height="1" fill="#505050"/><rect x="62" y="2" width="1" height="1" fill="#505050"/><rect x="66" y="2" width="1" height="1" fill="#505050"/><rect x="70" y="2" width="1" height="1" fill="#505050"/><rect x="74" y="2" width="1" height="1" fill="#505050"/><rect x="78" y="2" width="1" height="1" fill="#505050"/><rect x="82" y="2" width="1" height="1" fill="#505050"/><rect x="86" y="2" width="1" height="1" fill="#505050"/><rect x="90" y="2" width="1" height="1" fill="#505050"/><rect x="0" y="4" width="1" height="1" fill="#505050"/><rect x="4" y="4" width="1" height="1" fill="#505050"/><rect x="8" y="4" width="1" height="1" fill="#505050"/><rect x="12" y="4" width="1" height="1" fill="#505050"/><rect x="16" y="4" width="1" height="1" fill="#505050"/><rect x="20" y="4" width="1" height="1" fill="#505050"/><rect x="24" y="4" width="1" height="1" fill="#505050"/><rect x="28" y="4" width="1" height="1" fill="#505050"/><rect x="32" y="4" width="1" height="1" fill="#505050"/><rect x="36" y="4" width="1" height="1" fill="#505050"/><rect x="40" y="4" width="1" height="1" fill="#505050"/><rect x="44" y="4" width="1" height="1" fill="#505050"/><rect x="48" y="4" width="1" height="1" fill="#505050"/><rect x="52" y="4" width="1" height="1" fill="#505050"/><rect x="56" y="4" width="1" height="1" fill="#505050"/><rect x="60" y="4" width="1" height="1" fill="#505050"/><rect x="64" y="4" width="1" height="1" fill="#505050"/><rect x="68" y="4" width="1" height="1" fill="#505050"/><rect x="72" y="4" width="1" height="1" fill="#505050"/><rect x="76" y="4" width="1" height="1" fill="#505050"/><rect x="80" y="4" width="1" height="1" fill="#505050"/><rect x="84" y="4" width="1" height="1" fill="#505050"/><rect x="88" y="4" width="1" height="1" fill="#505050"/></svg>
<svg style="position:absolute;left:2503px;top:80px;" width="9" height="5" viewBox="0 0 9 5"><path d="M0 0.5 H9 L4.5 4.5 Z" fill="#e0e0e0"/></svg>
<svg style="position:absolute;left:2519px;top:77px;" width="10" height="12" viewBox="0 0 10 12"><path d="M2.5 0.5 H7.5 V6 L9 7.5 H1 L2.5 6 Z M5 7.5 V11.5" fill="#e0e0e0" stroke="#e0e0e0"/></svg>
<svg style="position:absolute;left:2535px;top:78px;" width="12" height="11" viewBox="0 0 12 11"><path d="M1 1 L11 10.5 M11 1 L1 10.5" stroke="#e0e0e0" stroke-width="1.4"/></svg>
<svg style="position:absolute;left:2288px;top:100px;" width="15" height="15" viewBox="0 0 15 15"><circle cx="7.5" cy="7.5" r="6.3" fill="none" stroke="#4a4a4a" stroke-width="1.1"/><path d="M11 7.5 H4.5 M7 5 L4.5 7.5 L7 10" fill="none" stroke="#4a4a4a" stroke-width="1.1"/></svg>
<svg style="position:absolute;left:2310px;top:100px;" width="15" height="15" viewBox="0 0 15 15"><circle cx="7.5" cy="7.5" r="6.3" fill="none" stroke="#4a4a4a" stroke-width="1.1"/><path d="M4 7.5 H10.5 M8 5 L10.5 7.5 L8 10" fill="none" stroke="#4a4a4a" stroke-width="1.1"/></svg>
<svg style="position:absolute;left:2332px;top:100px;" width="16" height="16" viewBox="0 0 16 16"><path d="M1 8 L8 1 L15 8 M3 6.5 V14.5 H6.5 V9.5 H9.5 V14.5 H13 V6.5" fill="none" stroke="#d6d6d6" stroke-width="1.1"/></svg>
<svg style="position:absolute;left:2353px;top:100px;" width="17" height="17" viewBox="0 0 17 17"><rect x="6.5" y="0.5" width="9" height="11" fill="#1f1f1f" stroke="#d6d6d6"/><path d="M8 3 H14 M9 5 H14 M9 7 H14 M9 9 H14" stroke="#d6d6d6"/><path d="M1 8.5 L3 7.5 L6 10 L9 7 L10 7.5 V15 L9 15.5 L6 12.5 L3 15 L1 14 Z" fill="#b180d7"/><path d="M2.5 9.5 V13 L4.5 11.2 Z M8 9.5 L6.3 11.2 L8 13 Z" fill="#1f1f1f"/></svg>
<div style="position:absolute;left:2376px;top:99px;width:1px;height:19px;background:#3d3d3d;"></div>
<svg style="position:absolute;left:2383px;top:99px;" width="18" height="18" viewBox="0 0 18 18"><path d="M1 0.5 H7 L5 3 V6 L3 5 V3 Z" fill="#4da3ff"/><circle cx="10" cy="10.5" r="5.6" fill="none" stroke="#d6d6d6" stroke-width="1.2"/><path d="M10 7 V10.8 H12.8" fill="none" stroke="#d6d6d6" stroke-width="1.1"/></svg>
<svg style="position:absolute;left:2408px;top:108px;" width="7" height="4" viewBox="0 0 7 4"><path d="M0 0 H7 L3.5 3.5 Z" fill="#d0d0d0"/></svg>
<svg style="position:absolute;left:2420px;top:102px;" width="15" height="12" viewBox="0 0 15 12"><path d="M14 3.5 H1.5 M4.5 0.5 L1.5 3.5 M1 8.5 H13.5 M10.5 11.5 L13.5 8.5" fill="none" stroke="#d6d6d6" stroke-width="1.2"/></svg>
<svg style="position:absolute;left:2441px;top:99px;" width="16" height="16" viewBox="0 0 16 16"><rect x="3.5" y="0.5" width="11.5" height="11.5" fill="#2a2a2a" stroke="#d6d6d6"/><rect x="0.5" y="3.5" width="11.5" height="11.5" fill="#2d2d2d" stroke="#d6d6d6"/><path d="M3 9.5 H9.5" stroke="#d6d6d6" stroke-width="1.2"/></svg>
<svg style="position:absolute;left:2463px;top:100px;" width="15" height="16" viewBox="0 0 15 16"><rect x="6.5" y="0.5" width="7.5" height="9" fill="#2a2a2a" stroke="#d6d6d6"/><rect x="0.5" y="3" width="7.5" height="9" fill="#2a2a2a" stroke="#d6d6d6"/><rect x="3.5" y="5.5" width="7.5" height="9" fill="#333" stroke="#d6d6d6"/></svg>
<div style="position:absolute;left:2485px;top:99px;width:1px;height:19px;background:#3d3d3d;"></div>
<svg style="position:absolute;left:2495px;top:103px;" width="12" height="9" viewBox="0 0 12 9"><path d="M3.8 1 L0.8 4.5 L3.8 8 M8.2 1 L11.2 4.5 L8.2 8" fill="none" stroke="#d6d6d6" stroke-width="1.3"/></svg>
<svg style="position:absolute;left:2515px;top:100px;" width="16" height="16" viewBox="0 0 16 16"><path d="M2 14 L8.5 7.5" stroke="#d6d6d6" stroke-width="2.6" stroke-linecap="round"/><path d="M2 14 L8.5 7.5" stroke="#1f1f1f" stroke-width="0.8" stroke-linecap="round"/><path d="M7.5 6.5 C6.8 3.5 9 1 12 1.2 L10.5 3.5 L12.5 5.5 L14.8 4 C15 7 12.5 9.3 9.5 8.5 Z" fill="#d6d6d6"/></svg>
<svg style="position:absolute;left:2543px;top:98px;" width="7" height="5" viewBox="0 0 7 5"><path d="M0 0 L2.5 2.5 L0 5 Z M4 0 L6.5 2.5 L4 5 Z" fill="#bbb"/></svg>
<div style="position:absolute;left:2281px;top:122px;width:271px;height:21px;background:#383838;"></div>
<div style="position:absolute;left:2286.3px;top:126.14px;font-family:'Liberation Sans', sans-serif;font-size:12px;line-height:normal;color:#d8d8d8;font-weight:normal;letter-spacing:-0.175px;white-space:pre;">Search Solution Explorer (Ctrl+;)</div>
<svg style="position:absolute;left:2523px;top:125px;" width="14" height="14" viewBox="0 0 14 14"><circle cx="8.8" cy="5.2" r="3.9" fill="none" stroke="#d0d0d0" stroke-width="1.8"/><path d="M6 8 L1.8 12.2" stroke="#d0d0d0" stroke-width="2.8" stroke-linecap="round"/></svg>
<svg style="position:absolute;left:2544px;top:131px;" width="7" height="4" viewBox="0 0 7 4"><path d="M0 0 H7 L3.5 3.5 Z" fill="#d0d0d0"/></svg>
<div style="position:absolute;left:2281px;top:506px;width:271px;height:19px;box-sizing:border-box;background:#3d3d3d;border:1px solid #5c5c5c"></div>
<svg style="position:absolute;left:2285px;top:150px;" width="8" height="9" viewBox="0 0 8 9"><path d="M2 4 V2.5 C2 0 6 0 6 2.5 V4" fill="none" stroke="#4da3ff" stroke-width="1.1"/><rect x="1.5" y="4.5" width="5" height="4" fill="none" stroke="#4da3ff" stroke-width="1.1"/></svg>
<svg style="position:absolute;left:2295px;top:147px;" width="15" height="15" viewBox="0 0 15 15"><path d="M0.5 13.5 V0.5 H13.5 V4 M0.5 3.5 H13.5 M0.5 13.5 H4" fill="none" stroke="#c8c8c8"/><path d="M5 8 L6.5 7 L9 9.3 L12 6.5 L14 7.5 V13.5 L12 14.5 L9 11.7 L6.5 14 L5 13 Z" fill="#b180d7"/><path d="M6.2 9.2 V12 L7.8 10.6 Z M12 8.8 L10.5 10.6 L12 12.3 Z" fill="#1f1f1f"/></svg>
<div style="position:absolute;left:2316.6px;top:148.14px;font-family:'Liberation Sans', sans-serif;font-size:12px;line-height:normal;color:#f1f1f1;font-weight:normal;letter-spacing:0.058px;white-space:pre;">Solution 'mt4-micro-service' (1 of 1 project)</div>
<svg style="position:absolute;left:2291px;top:170px;" width="7" height="7" viewBox="0 0 7 7"><path d="M6.5 0.5 V6.5 H0.5 Z" fill="#d0d0d0"/></svg>
<svg style="position:absolute;left:2304px;top:170px;" width="8" height="7" viewBox="0 0 8 7"><path d="M0.5 3.5 L3 6 L7.5 0.8" fill="none" stroke="#e8484b" stroke-width="1.3"/></svg>
<svg style="position:absolute;left:2314px;top:167px;" width="14" height="13" viewBox="0 0 14 13"><rect x="0.5" y="0.5" width="13" height="12" fill="#2d2d2d" stroke="#c8c8c8"/><path d="M2 4.5 H7 M4.5 2 V7 M6.5 8.5 H11.5 M9 6 V11" stroke="#d070d0" stroke-width="1"/></svg>
<div style="position:absolute;left:2334.5px;top:167.14px;font-family:'Liberation Sans', sans-serif;font-size:12px;line-height:normal;color:#ffffff;font-weight:bold;letter-spacing:0.026px;white-space:pre;">mt4-micro-service</div>
<svg style="position:absolute;left:2310px;top:187px;" width="6" height="10" viewBox="0 0 6 10"><path d="M0.5 0.8 L5.2 5 L0.5 9.2 Z" fill="none" stroke="#d0d0d0" stroke-width="1"/></svg>
<svg style="position:absolute;left:2332px;top:185px;" width="16" height="15" viewBox="0 0 16 15"><rect x="0.5" y="3.5" width="4" height="4" fill="none" stroke="#d0d0d0"/><path d="M4.5 5.5 H9" stroke="#d0d0d0"/><rect x="9.5" y="1.5" width="6" height="7" fill="#2d2d2d" stroke="#d0d0d0"/></svg>
<div style="position:absolute;left:2352.0px;top:186.14px;font-family:'Liberation Sans', sans-serif;font-size:12px;line-height:normal;color:#f1f1f1;font-weight:normal;letter-spacing:-0.12px;white-space:pre;">References</div>
<svg style="position:absolute;left:2310px;top:206px;" width="6" height="10" viewBox="0 0 6 10"><path d="M0.5 0.8 L5.2 5 L0.5 9.2 Z" fill="none" stroke="#d0d0d0" stroke-width="1"/></svg>
<svg style="position:absolute;left:2332px;top:204px;" width="16" height="15" viewBox="0 0 16 15"><path d="M0.5 2 H5 L6 3 H13.5 V11.5 H0.5 Z" fill="#9c8b5c" stroke="#f2d38b"/><rect x="0.5" y="6.5" width="6" height="7" fill="#1f1f1f" stroke="#d0d0d0"/><path d="M2.5 11.5 L5 9 M3 9 H5 V11" fill="none" stroke="#d0d0d0" stroke-width="0.8"/></svg>
<div style="position:absolute;left:2352.5px;top:205.14px;font-family:'Liberation Sans', sans-serif;font-size:12px;line-height:normal;color:#f1f1f1;font-weight:normal;letter-spacing:-0.329px;white-space:pre;">External Dependencies</div>
<svg style="position:absolute;left:2309px;top:227px;" width="7" height="7" viewBox="0 0 7 7"><path d="M6.5 0.5 V6.5 H0.5 Z" fill="#d0d0d0"/></svg>
<svg style="position:absolute;left:2332px;top:223px;" width="16" height="15" viewBox="0 0 16 15"><path d="M0.5 1 H5 L6 2 H13.5 V11.5 H0.5 Z" fill="#9c8b5c" stroke="#f2d38b"/><path d="M6 8 H15 L11.5 11 V14.5 H9.5 V11 Z" fill="#1f1f1f" stroke="#4da3ff" stroke-width="1.1"/></svg>
<div style="position:absolute;left:2352.0px;top:224.14px;font-family:'Liberation Sans', sans-serif;font-size:12px;line-height:normal;color:#f1f1f1;font-weight:normal;letter-spacing:-0.12px;white-space:pre;">core</div>
<svg style="position:absolute;left:2327px;top:244px;" width="6" height="10" viewBox="0 0 6 10"><path d="M0.5 0.8 L5.2 5 L0.5 9.2 Z" fill="none" stroke="#d0d0d0" stroke-width="1"/></svg>
<svg style="position:absolute;left:2350px;top:242px;" width="13" height="15" viewBox="0 0 13 15"><path d="M0.5 1.5 H8 L11.5 5 V13.5 H0.5 Z" fill="#2a2a2a" stroke="#d0d0d0"/><path d="M8 1.5 V5 H11.5 Z" fill="#d0d0d0"/><path d="M3.5 5 V12.5 M3.5 8.8 C4 8 6 7.8 7 8.3 C7.8 8.8 7.5 9.5 7.5 12.5" fill="none" stroke="#e0e0e0" stroke-width="1.4"/></svg>
<div style="position:absolute;left:2369.5px;top:243.14px;font-family:'Liberation Sans', sans-serif;font-size:12px;line-height:normal;color:#f1f1f1;font-weight:normal;letter-spacing:-0.12px;white-space:pre;">rabbit_client.hpp</div>
<svg style="position:absolute;left:2327px;top:263px;" width="6" height="10" viewBox="0 0 6 10"><path d="M0.5 0.8 L5.2 5 L0.5 9.2 Z" fill="none" stroke="#d0d0d0" stroke-width="1"/></svg>
<svg style="position:absolute;left:2350px;top:261px;" width="13" height="15" viewBox="0 0 13 15"><path d="M0.5 1.5 H8 L11.5 5 V13.5 H0.5 Z" fill="#2a2a2a" stroke="#d0d0d0"/><path d="M8 1.5 V5 H11.5 Z" fill="#d0d0d0"/><path d="M3.5 5 V12.5 M3.5 8.8 C4 8 6 7.8 7 8.3 C7.8 8.8 7.5 9.5 7.5 12.5" fill="none" stroke="#e0e0e0" stroke-width="1.4"/></svg>
<div style="position:absolute;left:2369.5px;top:262.14px;font-family:'Liberation Sans', sans-serif;font-size:12px;line-height:normal;color:#f1f1f1;font-weight:normal;letter-spacing:-0.12px;white-space:pre;">token_manager.hpp</div>
<svg style="position:absolute;left:2310px;top:282px;" width="6" height="10" viewBox="0 0 6 10"><path d="M0.5 0.8 L5.2 5 L0.5 9.2 Z" fill="none" stroke="#d0d0d0" stroke-width="1"/></svg>
<svg style="position:absolute;left:2321px;top:283px;" width="8" height="9" viewBox="0 0 8 9"><path d="M2 4 V2.5 C2 0 6 0 6 2.5 V4" fill="none" stroke="#4da3ff" stroke-width="1.1"/><rect x="1.5" y="4.5" width="5" height="4" fill="none" stroke="#4da3ff" stroke-width="1.1"/></svg>
<svg style="position:absolute;left:2332px;top:280px;" width="16" height="15" viewBox="0 0 16 15"><path d="M4.5 1 V9 M0.5 5 H8.5 M11.5 7 V15 M7.5 11 H15.5" stroke="#c586c0" stroke-width="1.1"/></svg>
<div style="position:absolute;left:2352.0px;top:281.14px;font-family:'Liberation Sans', sans-serif;font-size:12px;line-height:normal;color:#f1f1f1;font-weight:normal;letter-spacing:-0.12px;white-space:pre;">basic_controller.cpp</div>
<svg style="position:absolute;left:2310px;top:301px;" width="6" height="10" viewBox="0 0 6 10"><path d="M0.5 0.8 L5.2 5 L0.5 9.2 Z" fill="none" stroke="#d0d0d0" stroke-width="1"/></svg>
<svg style="position:absolute;left:2321px;top:302px;" width="8" height="9" viewBox="0 0 8 9"><path d="M2 4 V2.5 C2 0 6 0 6 2.5 V4" fill="none" stroke="#4da3ff" stroke-width="1.1"/><rect x="1.5" y="4.5" width="5" height="4" fill="none" stroke="#4da3ff" stroke-width="1.1"/></svg>
<svg style="position:absolute;left:2332px;top:300px;" width="16" height="15" viewBox="0 0 16 15"><path d="M0.5 1.5 H8 L11.5 5 V13.5 H0.5 Z" fill="#2a2a2a" stroke="#d0d0d0"/><path d="M8 1.5 V5 H11.5 Z" fill="#d0d0d0"/><path d="M3.5 5 V12.5 M3.5 8.8 C4 8 6 7.8 7 8.3 C7.8 8.8 7.5 9.5 7.5 12.5" fill="none" stroke="#e0e0e0" stroke-width="1.4"/></svg>
<div style="position:absolute;left:2352.0px;top:300.14px;font-family:'Liberation Sans', sans-serif;font-size:12px;line-height:normal;color:#f1f1f1;font-weight:normal;letter-spacing:-0.12px;white-space:pre;">basic_controller.hpp</div>
<svg style="position:absolute;left:2321px;top:323px;" width="8" height="7" viewBox="0 0 8 7"><path d="M0.5 3.5 L3 6 L7.5 0.8" fill="none" stroke="#e8484b" stroke-width="1.3"/></svg>
<svg style="position:absolute;left:2332px;top:319px;" width="16" height="15" viewBox="0 0 16 15"><path d="M0.5 1.5 H8 L11.5 5 V13.5 H0.5 Z" fill="#2a2a2a" stroke="#a0a0a0"/><path d="M8 1.5 V5 H11.5 Z" fill="#a0a0a0"/><path d="M4.5 5.5 C3.3 5.5 3.5 6.5 3.5 8 L2.5 9 L3.5 10 C3.5 11.5 3.3 12 4.5 12 M7.5 5.5 C8.7 5.5 8.5 6.5 8.5 8 L9.5 9 L8.5 10 C8.5 11.5 8.7 12 7.5 12" fill="none" stroke="#d8d8d8" stroke-width="1"/><circle cx="9.5" cy="11" r="3.6" fill="#e8484b"/><rect x="7.5" y="10.4" width="4" height="1.3" fill="#fff"/></svg>
<div style="position:absolute;left:2352.0px;top:319.14px;font-family:'Liberation Sans', sans-serif;font-size:12px;line-height:normal;color:#f1f1f1;font-weight:normal;letter-spacing:-0.12px;white-space:pre;">config.json</div>
<svg style="position:absolute;left:2310px;top:339px;" width="6" height="10" viewBox="0 0 6 10"><path d="M0.5 0.8 L5.2 5 L0.5 9.2 Z" fill="none" stroke="#d0d0d0" stroke-width="1"/></svg>
<svg style="position:absolute;left:2321px;top:340px;" width="8" height="9" viewBox="0 0 8 9"><path d="M2 4 V2.5 C2 0 6 0 6 2.5 V4" fill="none" stroke="#4da3ff" stroke-width="1.1"/><rect x="1.5" y="4.5" width="5" height="4" fill="none" stroke="#4da3ff" stroke-width="1.1"/></svg>
<svg style="position:absolute;left:2332px;top:337px;" width="16" height="15" viewBox="0 0 16 15"><path d="M4.5 1 V9 M0.5 5 H8.5 M11.5 7 V15 M7.5 11 H15.5" stroke="#c586c0" stroke-width="1.1"/></svg>
<div style="position:absolute;left:2352.0px;top:338.14px;font-family:'Liberation Sans', sans-serif;font-size:12px;line-height:normal;color:#f1f1f1;font-weight:normal;letter-spacing:-0.12px;white-space:pre;">config_manager.cpp</div>
<svg style="position:absolute;left:2310px;top:358px;" width="6" height="10" viewBox="0 0 6 10"><path d="M0.5 0.8 L5.2 5 L0.5 9.2 Z" fill="none" stroke="#d0d0d0" stroke-width="1"/></svg>
<svg style="position:absolute;left:2321px;top:359px;" width="8" height="9" viewBox="0 0 8 9"><path d="M2 4 V2.5 C2 0 6 0 6 2.5 V4" fill="none" stroke="#4da3ff" stroke-width="1.1"/><rect x="1.5" y="4.5" width="5" height="4" fill="none" stroke="#4da3ff" stroke-width="1.1"/></svg>
<svg style="position:absolute;left:2332px;top:357px;" width="16" height="15" viewBox="0 0 16 15"><path d="M0.5 1.5 H8 L11.5 5 V13.5 H0.5 Z" fill="#2a2a2a" stroke="#d0d0d0"/><path d="M8 1.5 V5 H11.5 Z" fill="#d0d0d0"/><path d="M3.5 5 V12.5 M3.5 8.8 C4 8 6 7.8 7 8.3 C7.8 8.8 7.5 9.5 7.5 12.5" fill="none" stroke="#e0e0e0" stroke-width="1.4"/></svg>
<div style="position:absolute;left:2352.0px;top:357.14px;font-family:'Liberation Sans', sans-serif;font-size:12px;line-height:normal;color:#f1f1f1;font-weight:normal;letter-spacing:-0.12px;white-space:pre;">config_manager.hpp</div>
<svg style="position:absolute;left:2310px;top:377px;" width="6" height="10" viewBox="0 0 6 10"><path d="M0.5 0.8 L5.2 5 L0.5 9.2 Z" fill="none" stroke="#d0d0d0" stroke-width="1"/></svg>
<svg style="position:absolute;left:2321px;top:378px;" width="8" height="9" viewBox="0 0 8 9"><path d="M2 4 V2.5 C2 0 6 0 6 2.5 V4" fill="none" stroke="#4da3ff" stroke-width="1.1"/><rect x="1.5" y="4.5" width="5" height="4" fill="none" stroke="#4da3ff" stroke-width="1.1"/></svg>
<svg style="position:absolute;left:2332px;top:376px;" width="16" height="15" viewBox="0 0 16 15"><path d="M0.5 1.5 H8 L11.5 5 V13.5 H0.5 Z" fill="#2a2a2a" stroke="#d0d0d0"/><path d="M8 1.5 V5 H11.5 Z" fill="#d0d0d0"/><path d="M3.5 5 V12.5 M3.5 8.8 C4 8 6 7.8 7 8.3 C7.8 8.8 7.5 9.5 7.5 12.5" fill="none" stroke="#e0e0e0" stroke-width="1.4"/></svg>
<div style="position:absolute;left:2352.0px;top:376.14px;font-family:'Liberation Sans', sans-serif;font-size:12px;line-height:normal;color:#f1f1f1;font-weight:normal;letter-spacing:-0.12px;white-space:pre;">controller.hpp</div>
<svg style="position:absolute;left:2321px;top:397px;" width="8" height="9" viewBox="0 0 8 9"><path d="M2 4 V2.5 C2 0 6 0 6 2.5 V4" fill="none" stroke="#4da3ff" stroke-width="1.1"/><rect x="1.5" y="4.5" width="5" height="4" fill="none" stroke="#4da3ff" stroke-width="1.1"/></svg>
<svg style="position:absolute;left:2332px;top:394px;" width="16" height="15" viewBox="0 0 16 15"><path d="M3.5 0.5 H8 L11.5 4 V13.5 H9 M3.5 0.5 V6" fill="#1f1f1f" stroke="#d0d0d0"/><path d="M2.5 9 L0.5 11 L2.5 13 M7.5 9 L9.5 11 L7.5 13" fill="none" stroke="#d0d0d0" stroke-width="0.9"/><circle cx="5" cy="11.5" r="1" fill="none" stroke="#4da3ff"/></svg>
<div style="position:absolute;left:2352.0px;top:395.14px;font-family:'Liberation Sans', sans-serif;font-size:12px;line-height:normal;color:#f1f1f1;font-weight:normal;letter-spacing:-0.12px;white-space:pre;">docs.html</div>
<svg style="position:absolute;left:2310px;top:415px;" width="6" height="10" viewBox="0 0 6 10"><path d="M0.5 0.8 L5.2 5 L0.5 9.2 Z" fill="none" stroke="#d0d0d0" stroke-width="1"/></svg>
<svg style="position:absolute;left:2321px;top:416px;" width="8" height="9" viewBox="0 0 8 9"><path d="M2 4 V2.5 C2 0 6 0 6 2.5 V4" fill="none" stroke="#4da3ff" stroke-width="1.1"/><rect x="1.5" y="4.5" width="5" height="4" fill="none" stroke="#4da3ff" stroke-width="1.1"/></svg>
<svg style="position:absolute;left:2332px;top:414px;" width="16" height="15" viewBox="0 0 16 15"><path d="M0.5 1.5 H8 L11.5 5 V13.5 H0.5 Z" fill="#2a2a2a" stroke="#d0d0d0"/><path d="M8 1.5 V5 H11.5 Z" fill="#d0d0d0"/><path d="M3.5 5 V12.5 M3.5 8.8 C4 8 6 7.8 7 8.3 C7.8 8.8 7.5 9.5 7.5 12.5" fill="none" stroke="#e0e0e0" stroke-width="1.4"/></svg>
<div style="position:absolute;left:2352.0px;top:414.14px;font-family:'Liberation Sans', sans-serif;font-size:12px;line-height:normal;color:#f1f1f1;font-weight:normal;letter-spacing:-0.12px;white-space:pre;">logger.hpp</div>
<svg style="position:absolute;left:2321px;top:435px;" width="8" height="9" viewBox="0 0 8 9"><path d="M2 4 V2.5 C2 0 6 0 6 2.5 V4" fill="none" stroke="#4da3ff" stroke-width="1.1"/><rect x="1.5" y="4.5" width="5" height="4" fill="none" stroke="#4da3ff" stroke-width="1.1"/></svg>
<svg style="position:absolute;left:2332px;top:432px;" width="16" height="15" viewBox="0 0 16 15"><path d="M3.5 0.5 H8 L11.5 4 V13.5 H8 M3.5 0.5 V7" fill="#1f1f1f" stroke="#d0d0d0"/><circle cx="3.5" cy="11" r="2.2" fill="none" stroke="#d0d0d0" stroke-width="1.6" stroke-dasharray="1.2 0.6"/></svg>
<div style="position:absolute;left:2352.0px;top:433.14px;font-family:'Liberation Sans', sans-serif;font-size:12px;line-height:normal;color:#f1f1f1;font-weight:normal;letter-spacing:-0.12px;white-space:pre;">logger.ini</div>
<svg style="position:absolute;left:2310px;top:453px;" width="6" height="10" viewBox="0 0 6 10"><path d="M0.5 0.8 L5.2 5 L0.5 9.2 Z" fill="none" stroke="#d0d0d0" stroke-width="1"/></svg>
<svg style="position:absolute;left:2321px;top:456px;" width="8" height="7" viewBox="0 0 8 7"><path d="M0.5 3.5 L3 6 L7.5 0.8" fill="none" stroke="#e8484b" stroke-width="1.3"/></svg>
<svg style="position:absolute;left:2332px;top:451px;" width="16" height="15" viewBox="0 0 16 15"><path d="M4.5 1 V9 M0.5 5 H8.5 M11.5 7 V15 M7.5 11 H15.5" stroke="#c586c0" stroke-width="1.1"/></svg>
<div style="position:absolute;left:2352.0px;top:452.14px;font-family:'Liberation Sans', sans-serif;font-size:12px;line-height:normal;color:#f1f1f1;font-weight:normal;letter-spacing:-0.12px;white-space:pre;">main.cpp</div>
<svg style="position:absolute;left:2310px;top:472px;" width="6" height="10" viewBox="0 0 6 10"><path d="M0.5 0.8 L5.2 5 L0.5 9.2 Z" fill="none" stroke="#d0d0d0" stroke-width="1"/></svg>
<svg style="position:absolute;left:2321px;top:473px;" width="8" height="9" viewBox="0 0 8 9"><path d="M2 4 V2.5 C2 0 6 0 6 2.5 V4" fill="none" stroke="#4da3ff" stroke-width="1.1"/><rect x="1.5" y="4.5" width="5" height="4" fill="none" stroke="#4da3ff" stroke-width="1.1"/></svg>
<svg style="position:absolute;left:2332px;top:470px;" width="16" height="15" viewBox="0 0 16 15"><path d="M4.5 1 V9 M0.5 5 H8.5 M11.5 7 V15 M7.5 11 H15.5" stroke="#c586c0" stroke-width="1.1"/></svg>
<div style="position:absolute;left:2352.0px;top:471.14px;font-family:'Liberation Sans', sans-serif;font-size:12px;line-height:normal;color:#f1f1f1;font-weight:normal;letter-spacing:-0.12px;white-space:pre;">microsvc_controller.cpp</div>
<svg style="position:absolute;left:2310px;top:491px;" width="6" height="10" viewBox="0 0 6 10"><path d="M0.5 0.8 L5.2 5 L0.5 9.2 Z" fill="none" stroke="#d0d0d0" stroke-width="1"/></svg>
<svg style="position:absolute;left:2321px;top:492px;" width="8" height="9" viewBox="0 0 8 9"><path d="M2 4 V2.5 C2 0 6 0 6 2.5 V4" fill="none" stroke="#4da3ff" stroke-width="1.1"/><rect x="1.5" y="4.5" width="5" height="4" fill="none" stroke="#4da3ff" stroke-width="1.1"/></svg>
<svg style="position:absolute;left:2332px;top:490px;" width="16" height="15" viewBox="0 0 16 15"><path d="M0.5 1.5 H8 L11.5 5 V13.5 H0.5 Z" fill="#2a2a2a" stroke="#d0d0d0"/><path d="M8 1.5 V5 H11.5 Z" fill="#d0d0d0"/><path d="M3.5 5 V12.5 M3.5 8.8 C4 8 6 7.8 7 8.3 C7.8 8.8 7.5 9.5 7.5 12.5" fill="none" stroke="#e0e0e0" stroke-width="1.4"/></svg>
<div style="position:absolute;left:2352.0px;top:490.14px;font-family:'Liberation Sans', sans-serif;font-size:12px;line-height:normal;color:#f1f1f1;font-weight:normal;letter-spacing:-0.12px;white-space:pre;">microsvc_controller.hpp</div>
<svg style="position:absolute;left:2310px;top:510px;" width="6" height="10" viewBox="0 0 6 10"><path d="M0.5 0.8 L5.2 5 L0.5 9.2 Z" fill="none" stroke="#d0d0d0" stroke-width="1"/></svg>
<svg style="position:absolute;left:2321px;top:511px;" width="8" height="9" viewBox="0 0 8 9"><path d="M2 4 V2.5 C2 0 6 0 6 2.5 V4" fill="none" stroke="#4da3ff" stroke-width="1.1"/><rect x="1.5" y="4.5" width="5" height="4" fill="none" stroke="#4da3ff" stroke-width="1.1"/></svg>
<svg style="position:absolute;left:2332px;top:509px;" width="16" height="15" viewBox="0 0 16 15"><path d="M0.5 1.5 H8 L11.5 5 V13.5 H0.5 Z" fill="#2a2a2a" stroke="#d0d0d0"/><path d="M8 1.5 V5 H11.5 Z" fill="#d0d0d0"/><path d="M3.5 5 V12.5 M3.5 8.8 C4 8 6 7.8 7 8.3 C7.8 8.8 7.5 9.5 7.5 12.5" fill="none" stroke="#e0e0e0" stroke-width="1.4"/></svg>
<div style="position:absolute;left:2352.0px;top:509.14px;font-family:'Liberation Sans', sans-serif;font-size:12px;line-height:normal;color:#f1f1f1;font-weight:normal;letter-spacing:-0.12px;white-space:pre;">MT4ManagerAPI.h</div>
<svg style="position:absolute;left:2310px;top:529px;" width="6" height="10" viewBox="0 0 6 10"><path d="M0.5 0.8 L5.2 5 L0.5 9.2 Z" fill="none" stroke="#d0d0d0" stroke-width="1"/></svg>
<svg style="position:absolute;left:2321px;top:530px;" width="8" height="9" viewBox="0 0 8 9"><path d="M2 4 V2.5 C2 0 6 0 6 2.5 V4" fill="none" stroke="#4da3ff" stroke-width="1.1"/><rect x="1.5" y="4.5" width="5" height="4" fill="none" stroke="#4da3ff" stroke-width="1.1"/></svg>
<svg style="position:absolute;left:2332px;top:527px;" width="16" height="15" viewBox="0 0 16 15"><path d="M4.5 1 V9 M0.5 5 H8.5 M11.5 7 V15 M7.5 11 H15.5" stroke="#c586c0" stroke-width="1.1"/></svg>
<div style="position:absolute;left:2352.0px;top:528.14px;font-family:'Liberation Sans', sans-serif;font-size:12px;line-height:normal;color:#f1f1f1;font-weight:normal;letter-spacing:-0.12px;white-space:pre;">network_utils.cpp</div>
<svg style="position:absolute;left:2310px;top:548px;" width="6" height="10" viewBox="0 0 6 10"><path d="M0.5 0.8 L5.2 5 L0.5 9.2 Z" fill="none" stroke="#d0d0d0" stroke-width="1"/></svg>
<svg style="position:absolute;left:2321px;top:549px;" width="8" height="9" viewBox="0 0 8 9"><path d="M2 4 V2.5 C2 0 6 0 6 2.5 V4" fill="none" stroke="#4da3ff" stroke-width="1.1"/><rect x="1.5" y="4.5" width="5" height="4" fill="none" stroke="#4da3ff" stroke-width="1.1"/></svg>
<svg style="position:absolute;left:2332px;top:547px;" width="16" height="15" viewBox="0 0 16 15"><path d="M0.5 1.5 H8 L11.5 5 V13.5 H0.5 Z" fill="#2a2a2a" stroke="#d0d0d0"/><path d="M8 1.5 V5 H11.5 Z" fill="#d0d0d0"/><path d="M3.5 5 V12.5 M3.5 8.8 C4 8 6 7.8 7 8.3 C7.8 8.8 7.5 9.5 7.5 12.5" fill="none" stroke="#e0e0e0" stroke-width="1.4"/></svg>
<div style="position:absolute;left:2352.0px;top:547.14px;font-family:'Liberation Sans', sans-serif;font-size:12px;line-height:normal;color:#f1f1f1;font-weight:normal;letter-spacing:-0.12px;white-space:pre;">network_utils.hpp</div>
<svg style="position:absolute;left:2310px;top:567px;" width="6" height="10" viewBox="0 0 6 10"><path d="M0.5 0.8 L5.2 5 L0.5 9.2 Z" fill="none" stroke="#d0d0d0" stroke-width="1"/></svg>
<svg style="position:absolute;left:2321px;top:570px;" width="8" height="7" viewBox="0 0 8 7"><path d="M0.5 3.5 L3 6 L7.5 0.8" fill="none" stroke="#e8484b" stroke-width="1.3"/></svg>
<svg style="position:absolute;left:2332px;top:565px;" width="16" height="15" viewBox="0 0 16 15"><path d="M4.5 1 V9 M0.5 5 H8.5 M11.5 7 V15 M7.5 11 H15.5" stroke="#c586c0" stroke-width="1.1"/></svg>
<div style="position:absolute;left:2352.0px;top:566.14px;font-family:'Liberation Sans', sans-serif;font-size:12px;line-height:normal;color:#f1f1f1;font-weight:normal;letter-spacing:-0.12px;white-space:pre;">pump_manager.cpp</div>
<svg style="position:absolute;left:2310px;top:586px;" width="6" height="10" viewBox="0 0 6 10"><path d="M0.5 0.8 L5.2 5 L0.5 9.2 Z" fill="none" stroke="#d0d0d0" stroke-width="1"/></svg>
<svg style="position:absolute;left:2321px;top:589px;" width="8" height="7" viewBox="0 0 8 7"><path d="M0.5 3.5 L3 6 L7.5 0.8" fill="none" stroke="#e8484b" stroke-width="1.3"/></svg>
<svg style="position:absolute;left:2332px;top:585px;" width="16" height="15" viewBox="0 0 16 15"><path d="M0.5 1.5 H8 L11.5 5 V13.5 H0.5 Z" fill="#2a2a2a" stroke="#d0d0d0"/><path d="M8 1.5 V5 H11.5 Z" fill="#d0d0d0"/><path d="M3.5 5 V12.5 M3.5 8.8 C4 8 6 7.8 7 8.3 C7.8 8.8 7.5 9.5 7.5 12.5" fill="none" stroke="#e0e0e0" stroke-width="1.4"/></svg>
<div style="position:absolute;left:2352.0px;top:585.14px;font-family:'Liberation Sans', sans-serif;font-size:12px;line-height:normal;color:#f1f1f1;font-weight:normal;letter-spacing:-0.12px;white-space:pre;">pump_manager.hpp</div>
<svg style="position:absolute;left:2310px;top:605px;" width="6" height="10" viewBox="0 0 6 10"><path d="M0.5 0.8 L5.2 5 L0.5 9.2 Z" fill="none" stroke="#d0d0d0" stroke-width="1"/></svg>
<svg style="position:absolute;left:2321px;top:606px;" width="8" height="9" viewBox="0 0 8 9"><path d="M2 4 V2.5 C2 0 6 0 6 2.5 V4" fill="none" stroke="#4da3ff" stroke-width="1.1"/><rect x="1.5" y="4.5" width="5" height="4" fill="none" stroke="#4da3ff" stroke-width="1.1"/></svg>
<svg style="position:absolute;left:2332px;top:603px;" width="16" height="15" viewBox="0 0 16 15"><path d="M4.5 1 V9 M0.5 5 H8.5 M11.5 7 V15 M7.5 11 H15.5" stroke="#c586c0" stroke-width="1.1"/></svg>
<div style="position:absolute;left:2352.0px;top:604.14px;font-family:'Liberation Sans', sans-serif;font-size:12px;line-height:normal;color:#f1f1f1;font-weight:normal;letter-spacing:-0.12px;white-space:pre;">redis_client.cpp</div>
<svg style="position:absolute;left:2310px;top:624px;" width="6" height="10" viewBox="0 0 6 10"><path d="M0.5 0.8 L5.2 5 L0.5 9.2 Z" fill="none" stroke="#d0d0d0" stroke-width="1"/></svg>
<svg style="position:absolute;left:2321px;top:625px;" width="8" height="9" viewBox="0 0 8 9"><path d="M2 4 V2.5 C2 0 6 0 6 2.5 V4" fill="none" stroke="#4da3ff" stroke-width="1.1"/><rect x="1.5" y="4.5" width="5" height="4" fill="none" stroke="#4da3ff" stroke-width="1.1"/></svg>
<svg style="position:absolute;left:2332px;top:623px;" width="16" height="15" viewBox="0 0 16 15"><path d="M0.5 1.5 H8 L11.5 5 V13.5 H0.5 Z" fill="#2a2a2a" stroke="#d0d0d0"/><path d="M8 1.5 V5 H11.5 Z" fill="#d0d0d0"/><path d="M3.5 5 V12.5 M3.5 8.8 C4 8 6 7.8 7 8.3 C7.8 8.8 7.5 9.5 7.5 12.5" fill="none" stroke="#e0e0e0" stroke-width="1.4"/></svg>
<div style="position:absolute;left:2352.0px;top:623.14px;font-family:'Liberation Sans', sans-serif;font-size:12px;line-height:normal;color:#f1f1f1;font-weight:normal;letter-spacing:-0.12px;white-space:pre;">redis_client.hpp</div>
<svg style="position:absolute;left:2310px;top:643px;" width="6" height="10" viewBox="0 0 6 10"><path d="M0.5 0.8 L5.2 5 L0.5 9.2 Z" fill="none" stroke="#d0d0d0" stroke-width="1"/></svg>
<svg style="position:absolute;left:2321px;top:646px;" width="8" height="7" viewBox="0 0 8 7"><path d="M0.5 3.5 L3 6 L7.5 0.8" fill="none" stroke="#e8484b" stroke-width="1.3"/></svg>
<svg style="position:absolute;left:2332px;top:641px;" width="16" height="15" viewBox="0 0 16 15"><path d="M4.5 1 V9 M0.5 5 H8.5 M11.5 7 V15 M7.5 11 H15.5" stroke="#c586c0" stroke-width="1.1"/></svg>
<div style="position:absolute;left:2352.0px;top:642.14px;font-family:'Liberation Sans', sans-serif;font-size:12px;line-height:normal;color:#f1f1f1;font-weight:normal;letter-spacing:-0.12px;white-space:pre;">session_manager.cpp</div>
<svg style="position:absolute;left:2310px;top:662px;" width="6" height="10" viewBox="0 0 6 10"><path d="M0.5 0.8 L5.2 5 L0.5 9.2 Z" fill="none" stroke="#d0d0d0" stroke-width="1"/></svg>
<svg style="position:absolute;left:2321px;top:665px;" width="8" height="7" viewBox="0 0 8 7"><path d="M0.5 3.5 L3 6 L7.5 0.8" fill="none" stroke="#e8484b" stroke-width="1.3"/></svg>
<svg style="position:absolute;left:2332px;top:661px;" width="16" height="15" viewBox="0 0 16 15"><path d="M0.5 1.5 H8 L11.5 5 V13.5 H0.5 Z" fill="#2a2a2a" stroke="#d0d0d0"/><path d="M8 1.5 V5 H11.5 Z" fill="#d0d0d0"/><path d="M3.5 5 V12.5 M3.5 8.8 C4 8 6 7.8 7 8.3 C7.8 8.8 7.5 9.5 7.5 12.5" fill="none" stroke="#e0e0e0" stroke-width="1.4"/></svg>
<div style="position:absolute;left:2352.0px;top:661.14px;font-family:'Liberation Sans', sans-serif;font-size:12px;line-height:normal;color:#f1f1f1;font-weight:normal;letter-spacing:-0.12px;white-space:pre;">session_manager.hpp</div>
<svg style="position:absolute;left:2310px;top:681px;" width="6" height="10" viewBox="0 0 6 10"><path d="M0.5 0.8 L5.2 5 L0.5 9.2 Z" fill="none" stroke="#d0d0d0" stroke-width="1"/></svg>
<svg style="position:absolute;left:2321px;top:682px;" width="8" height="9" viewBox="0 0 8 9"><path d="M2 4 V2.5 C2 0 6 0 6 2.5 V4" fill="none" stroke="#4da3ff" stroke-width="1.1"/><rect x="1.5" y="4.5" width="5" height="4" fill="none" stroke="#4da3ff" stroke-width="1.1"/></svg>
<svg style="position:absolute;left:2332px;top:679px;" width="16" height="15" viewBox="0 0 16 15"><path d="M4.5 1 V9 M0.5 5 H8.5 M11.5 7 V15 M7.5 11 H15.5" stroke="#c586c0" stroke-width="1.1"/></svg>
<div style="position:absolute;left:2352.0px;top:680.14px;font-family:'Liberation Sans', sans-serif;font-size:12px;line-height:normal;color:#f1f1f1;font-weight:normal;letter-spacing:-0.12px;white-space:pre;">sha256.cpp</div>
<svg style="position:absolute;left:2310px;top:700px;" width="6" height="10" viewBox="0 0 6 10"><path d="M0.5 0.8 L5.2 5 L0.5 9.2 Z" fill="none" stroke="#d0d0d0" stroke-width="1"/></svg>
<svg style="position:absolute;left:2321px;top:701px;" width="8" height="9" viewBox="0 0 8 9"><path d="M2 4 V2.5 C2 0 6 0 6 2.5 V4" fill="none" stroke="#4da3ff" stroke-width="1.1"/><rect x="1.5" y="4.5" width="5" height="4" fill="none" stroke="#4da3ff" stroke-width="1.1"/></svg>
<svg style="position:absolute;left:2332px;top:699px;" width="16" height="15" viewBox="0 0 16 15"><path d="M0.5 1.5 H8 L11.5 5 V13.5 H0.5 Z" fill="#2a2a2a" stroke="#d0d0d0"/><path d="M8 1.5 V5 H11.5 Z" fill="#d0d0d0"/><path d="M3.5 5 V12.5 M3.5 8.8 C4 8 6 7.8 7 8.3 C7.8 8.8 7.5 9.5 7.5 12.5" fill="none" stroke="#e0e0e0" stroke-width="1.4"/></svg>
<div style="position:absolute;left:2352.0px;top:699.14px;font-family:'Liberation Sans', sans-serif;font-size:12px;line-height:normal;color:#f1f1f1;font-weight:normal;letter-spacing:-0.12px;white-space:pre;">sha256.h</div>
<svg style="position:absolute;left:2321px;top:720px;" width="8" height="9" viewBox="0 0 8 9"><path d="M2 4 V2.5 C2 0 6 0 6 2.5 V4" fill="none" stroke="#4da3ff" stroke-width="1.1"/><rect x="1.5" y="4.5" width="5" height="4" fill="none" stroke="#4da3ff" stroke-width="1.1"/></svg>
<svg style="position:absolute;left:2332px;top:718px;" width="16" height="15" viewBox="0 0 16 15"><path d="M0.5 1.5 H8 L11.5 5 V13.5 H0.5 Z" fill="#2a2a2a" stroke="#d0d0d0"/><path d="M8 1.5 V5 H11.5 Z" fill="#d0d0d0"/><path d="M3.5 5 V12.5 M3.5 8.8 C4 8 6 7.8 7 8.3 C7.8 8.8 7.5 9.5 7.5 12.5" fill="none" stroke="#e0e0e0" stroke-width="1.4"/></svg>
<div style="position:absolute;left:2352.0px;top:718.14px;font-family:'Liberation Sans', sans-serif;font-size:12px;line-height:normal;color:#f1f1f1;font-weight:normal;letter-spacing:-0.12px;white-space:pre;">std_micro_service.hpp</div>
<svg style="position:absolute;left:2321px;top:739px;" width="8" height="9" viewBox="0 0 8 9"><path d="M2 4 V2.5 C2 0 6 0 6 2.5 V4" fill="none" stroke="#4da3ff" stroke-width="1.1"/><rect x="1.5" y="4.5" width="5" height="4" fill="none" stroke="#4da3ff" stroke-width="1.1"/></svg>
<svg style="position:absolute;left:2332px;top:736px;" width="16" height="15" viewBox="0 0 16 15"><path d="M4.5 1 V9 M0.5 5 H8.5 M11.5 7 V15 M7.5 11 H15.5" stroke="#c586c0" stroke-width="1.1"/></svg>
<div style="position:absolute;left:2352.0px;top:737.14px;font-family:'Liberation Sans', sans-serif;font-size:12px;line-height:normal;color:#f1f1f1;font-weight:normal;letter-spacing:-0.12px;white-space:pre;">stdafx.cpp</div>
<svg style="position:absolute;left:2310px;top:757px;" width="6" height="10" viewBox="0 0 6 10"><path d="M0.5 0.8 L5.2 5 L0.5 9.2 Z" fill="none" stroke="#d0d0d0" stroke-width="1"/></svg>
<svg style="position:absolute;left:2321px;top:760px;" width="8" height="7" viewBox="0 0 8 7"><path d="M0.5 3.5 L3 6 L7.5 0.8" fill="none" stroke="#e8484b" stroke-width="1.3"/></svg>
<svg style="position:absolute;left:2332px;top:756px;" width="16" height="15" viewBox="0 0 16 15"><path d="M0.5 1.5 H8 L11.5 5 V13.5 H0.5 Z" fill="#2a2a2a" stroke="#d0d0d0"/><path d="M8 1.5 V5 H11.5 Z" fill="#d0d0d0"/><path d="M3.5 5 V12.5 M3.5 8.8 C4 8 6 7.8 7 8.3 C7.8 8.8 7.5 9.5 7.5 12.5" fill="none" stroke="#e0e0e0" stroke-width="1.4"/></svg>
<div style="position:absolute;left:2352.0px;top:756.14px;font-family:'Liberation Sans', sans-serif;font-size:12px;line-height:normal;color:#f1f1f1;font-weight:normal;letter-spacing:-0.12px;white-space:pre;">stdafx.h</div>
<svg style="position:absolute;left:2321px;top:779px;" width="8" height="7" viewBox="0 0 8 7"><path d="M0.5 3.5 L3 6 L7.5 0.8" fill="none" stroke="#e8484b" stroke-width="1.3"/></svg>
<svg style="position:absolute;left:2332px;top:775px;" width="16" height="15" viewBox="0 0 16 15"><path d="M0.5 1.5 H8 L11.5 5 V13.5 H0.5 Z" fill="#2a2a2a" stroke="#a0a0a0"/><path d="M8 1.5 V5 H11.5 Z" fill="#a0a0a0"/><path d="M4.5 5.5 C3.3 5.5 3.5 6.5 3.5 8 L2.5 9 L3.5 10 C3.5 11.5 3.3 12 4.5 12 M7.5 5.5 C8.7 5.5 8.5 6.5 8.5 8 L9.5 9 L8.5 10 C8.5 11.5 8.7 12 7.5 12" fill="none" stroke="#d8d8d8" stroke-width="1"/></svg>
<div style="position:absolute;left:2352.0px;top:775.14px;font-family:'Liberation Sans', sans-serif;font-size:12px;line-height:normal;color:#f1f1f1;font-weight:normal;letter-spacing:-0.12px;white-space:pre;">swagger.json</div>
<svg style="position:absolute;left:2321px;top:796px;" width="8" height="9" viewBox="0 0 8 9"><path d="M2 4 V2.5 C2 0 6 0 6 2.5 V4" fill="none" stroke="#4da3ff" stroke-width="1.1"/><rect x="1.5" y="4.5" width="5" height="4" fill="none" stroke="#4da3ff" stroke-width="1.1"/></svg>
<svg style="position:absolute;left:2332px;top:794px;" width="16" height="15" viewBox="0 0 16 15"><path d="M0.5 1.5 H8 L11.5 5 V13.5 H0.5 Z" fill="#2a2a2a" stroke="#d0d0d0"/><path d="M8 1.5 V5 H11.5 Z" fill="#d0d0d0"/><path d="M3.5 5 V12.5 M3.5 8.8 C4 8 6 7.8 7 8.3 C7.8 8.8 7.5 9.5 7.5 12.5" fill="none" stroke="#e0e0e0" stroke-width="1.4"/></svg>
<div style="position:absolute;left:2352.0px;top:794.14px;font-family:'Liberation Sans', sans-serif;font-size:12px;line-height:normal;color:#f1f1f1;font-weight:normal;letter-spacing:-0.12px;white-space:pre;">targetver.h</div>
<svg style="position:absolute;left:2310px;top:814px;" width="6" height="10" viewBox="0 0 6 10"><path d="M0.5 0.8 L5.2 5 L0.5 9.2 Z" fill="none" stroke="#d0d0d0" stroke-width="1"/></svg>
<svg style="position:absolute;left:2321px;top:815px;" width="8" height="9" viewBox="0 0 8 9"><path d="M2 4 V2.5 C2 0 6 0 6 2.5 V4" fill="none" stroke="#4da3ff" stroke-width="1.1"/><rect x="1.5" y="4.5" width="5" height="4" fill="none" stroke="#4da3ff" stroke-width="1.1"/></svg>
<svg style="position:absolute;left:2332px;top:813px;" width="16" height="15" viewBox="0 0 16 15"><path d="M0.5 1.5 H8 L11.5 5 V13.5 H0.5 Z" fill="#2a2a2a" stroke="#d0d0d0"/><path d="M8 1.5 V5 H11.5 Z" fill="#d0d0d0"/><path d="M3.5 5 V12.5 M3.5 8.8 C4 8 6 7.8 7 8.3 C7.8 8.8 7.5 9.5 7.5 12.5" fill="none" stroke="#e0e0e0" stroke-width="1.4"/></svg>
<div style="position:absolute;left:2352.0px;top:813.14px;font-family:'Liberation Sans', sans-serif;font-size:12px;line-height:normal;color:#f1f1f1;font-weight:normal;letter-spacing:-0.12px;white-space:pre;">types.hpp</div>
<svg style="position:absolute;left:2310px;top:833px;" width="6" height="10" viewBox="0 0 6 10"><path d="M0.5 0.8 L5.2 5 L0.5 9.2 Z" fill="none" stroke="#d0d0d0" stroke-width="1"/></svg>
<svg style="position:absolute;left:2321px;top:834px;" width="8" height="9" viewBox="0 0 8 9"><path d="M2 4 V2.5 C2 0 6 0 6 2.5 V4" fill="none" stroke="#4da3ff" stroke-width="1.1"/><rect x="1.5" y="4.5" width="5" height="4" fill="none" stroke="#4da3ff" stroke-width="1.1"/></svg>
<svg style="position:absolute;left:2332px;top:832px;" width="16" height="15" viewBox="0 0 16 15"><path d="M0.5 1.5 H8 L11.5 5 V13.5 H0.5 Z" fill="#2a2a2a" stroke="#d0d0d0"/><path d="M8 1.5 V5 H11.5 Z" fill="#d0d0d0"/><path d="M3.5 5 V12.5 M3.5 8.8 C4 8 6 7.8 7 8.3 C7.8 8.8 7.5 9.5 7.5 12.5" fill="none" stroke="#e0e0e0" stroke-width="1.4"/></svg>
<div style="position:absolute;left:2352.5px;top:832.14px;font-family:'Liberation Sans', sans-serif;font-size:12px;line-height:normal;color:#f1f1f1;font-weight:normal;letter-spacing:-0.093px;white-space:pre;">usr_interrupt_handler.hpp</div>
<svg style="position:absolute;left:2310px;top:852px;" width="6" height="10" viewBox="0 0 6 10"><path d="M0.5 0.8 L5.2 5 L0.5 9.2 Z" fill="none" stroke="#d0d0d0" stroke-width="1"/></svg>
<svg style="position:absolute;left:2321px;top:853px;" width="8" height="9" viewBox="0 0 8 9"><path d="M2 4 V2.5 C2 0 6 0 6 2.5 V4" fill="none" stroke="#4da3ff" stroke-width="1.1"/><rect x="1.5" y="4.5" width="5" height="4" fill="none" stroke="#4da3ff" stroke-width="1.1"/></svg>
<svg style="position:absolute;left:2332px;top:851px;" width="16" height="15" viewBox="0 0 16 15"><path d="M0.5 1.5 H8 L11.5 5 V13.5 H0.5 Z" fill="#2a2a2a" stroke="#d0d0d0"/><path d="M8 1.5 V5 H11.5 Z" fill="#d0d0d0"/><path d="M3.5 5 V12.5 M3.5 8.8 C4 8 6 7.8 7 8.3 C7.8 8.8 7.5 9.5 7.5 12.5" fill="none" stroke="#e0e0e0" stroke-width="1.4"/></svg>
<div style="position:absolute;left:2352.0px;top:851.14px;font-family:'Liberation Sans', sans-serif;font-size:12px;line-height:normal;color:#f1f1f1;font-weight:normal;letter-spacing:-0.12px;white-space:pre;">winsock_initializer.h</div>
<div style="position:absolute;left:2280px;top:1317px;width:273px;height:1px;background:#3f3f3f;"></div>
<div style="position:absolute;left:2280px;top:1317px;width:1px;height:20px;background:#3f3f3f;"></div>
<div style="position:absolute;left:2381px;top:1317px;width:1px;height:20px;background:#3f3f3f;"></div>
<div style="position:absolute;left:2280px;top:1336px;width:102px;height:1px;background:#3f3f3f;"></div>
<div style="position:absolute;left:2281px;top:1317px;width:100px;height:19px;background:#1f1f1f;"></div>
<div style="position:absolute;left:2286.5px;top:1319.94px;font-family:'Liberation Sans', sans-serif;font-size:12px;line-height:normal;color:#f1f1f1;font-weight:normal;letter-spacing:-0.117px;white-space:pre;">Solution Explorer</div>
<div style="position:absolute;left:2388.6px;top:1319.94px;font-family:'Liberation Sans', sans-serif;font-size:12px;line-height:normal;color:#c8c8c8;font-weight:normal;letter-spacing:-0.432px;white-space:pre;">Git Changes</div>
<div style="position:absolute;left:2464.39px;top:1319.94px;font-family:'Liberation Sans', sans-serif;font-size:12px;line-height:normal;color:#c8c8c8;font-weight:normal;letter-spacing:-0.45px;white-space:pre;">Class View</div>
</body></html>
